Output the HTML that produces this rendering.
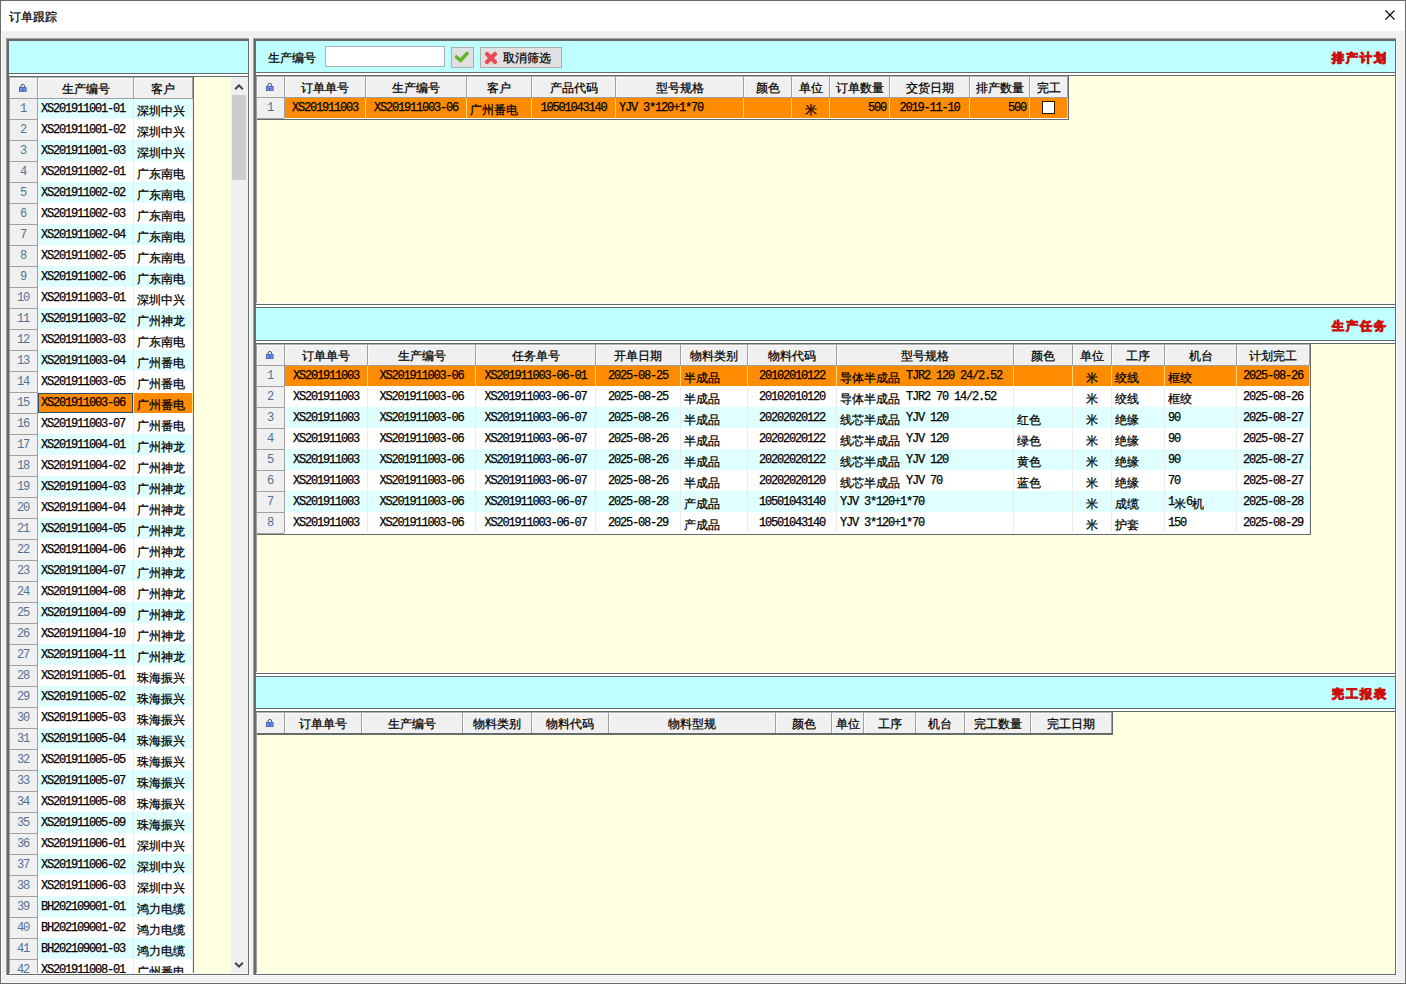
<!DOCTYPE html><html><head><meta charset="utf-8"><style>
@font-face{font-family:"Liberation Sans Box";src:local("Liberation Sans");size-adjust:150%;font-display:swap}
*{margin:0;padding:0}
html,body{width:1406px;height:984px;overflow:hidden;background:#f0f0f0}
body{position:relative;font-family:"Liberation Sans",sans-serif;}
div{position:absolute}
.tx{white-space:nowrap;overflow:hidden;color:#000;font-size:12px}
i{display:inline-block;width:12px;height:inherit;line-height:inherit;text-align:center;font-style:normal;font-family:"Liberation Sans Box","Liberation Sans",sans-serif;font-size:12px;vertical-align:top;overflow:visible;-webkit-text-stroke-width:0.25px}
.red{color:#cc1010;font-weight:bold}
.red i{width:14px;-webkit-text-stroke-width:1px}
.num{color:#4f7396}
.num b{-webkit-text-stroke-width:0}
b{display:inline-block;width:6px;height:inherit;line-height:inherit;vertical-align:top;text-align:center;font-family:"Liberation Mono",monospace;font-size:12px;font-weight:normal;-webkit-text-stroke-width:0.25px}
</style></head><body><div style="left:0px;top:0px;width:1406px;height:984px;background:#f0f0f0;"></div><div style="left:0px;top:0px;width:1406px;height:1px;background:#6b6b6b;"></div><div style="left:0px;top:983px;width:1406px;height:1px;background:#6b6b6b;"></div><div style="left:0px;top:0px;width:1px;height:984px;background:#6b6b6b;"></div><div style="left:1405px;top:0px;width:1px;height:984px;background:#6b6b6b;"></div><div style="left:1px;top:1px;width:1404px;height:30px;background:#ffffff;"></div><div style="left:1px;top:31px;width:1px;height:952px;background:#ffffff;"></div><div style="left:1404px;top:31px;width:1px;height:952px;background:#fafafa;"></div><div style="left:1px;top:982px;width:1404px;height:1px;background:#fafafa;"></div><div class="tx ttl" style="left:9px;top:5px;width:80px;height:20px;line-height:20px;text-align:left;"><i>订</i><i>单</i><i>跟</i><i>踪</i></div><svg style="position:absolute;left:1384px;top:9px" width="12" height="12"><path d="M1.5 1.5 L10.5 10.5 M10.5 1.5 L1.5 10.5" stroke="#000" stroke-width="1.1"/></svg><div style="left:6px;top:38px;width:244px;height:1px;background:#a0a0a0;"></div><div style="left:6px;top:38px;width:1px;height:938px;background:#a0a0a0;"></div><div style="left:7px;top:39px;width:242px;height:2px;background:#646b6b;"></div><div style="left:7px;top:39px;width:2px;height:936px;background:#646b6b;"></div><div style="left:248px;top:39px;width:1px;height:936px;background:#646b6b;"></div><div style="left:249px;top:38px;width:1px;height:938px;background:#ffffff;"></div><div style="left:7px;top:974px;width:242px;height:1px;background:#646b6b;"></div><div style="left:6px;top:975px;width:244px;height:1px;background:#ffffff;"></div><div style="left:9px;top:41px;width:239px;height:32px;background:#c0ffff;"></div><div style="left:9px;top:73px;width:239px;height:1px;background:#646b6b;"></div><div style="left:9px;top:74px;width:239px;height:2px;background:#ffffff;"></div><div style="left:9px;top:76px;width:239px;height:1px;background:#646b6b;"></div><div style="left:9px;top:77px;width:239px;height:897px;background:#ffffe1;"></div><div style="left:38px;top:99px;width:155px;height:20px;background:#e0ffff;"></div><div style="left:133px;top:99px;width:1px;height:20px;background:#ebebeb;"></div><div style="left:192px;top:99px;width:1px;height:20px;background:#ebebeb;"></div><div style="left:38px;top:119px;width:155px;height:21px;background:#ffffff;"></div><div style="left:133px;top:119px;width:1px;height:21px;background:#ebebeb;"></div><div style="left:192px;top:119px;width:1px;height:21px;background:#ebebeb;"></div><div style="left:38px;top:140px;width:155px;height:21px;background:#e0ffff;"></div><div style="left:133px;top:140px;width:1px;height:21px;background:#ebebeb;"></div><div style="left:192px;top:140px;width:1px;height:21px;background:#ebebeb;"></div><div style="left:38px;top:161px;width:155px;height:21px;background:#ffffff;"></div><div style="left:133px;top:161px;width:1px;height:21px;background:#ebebeb;"></div><div style="left:192px;top:161px;width:1px;height:21px;background:#ebebeb;"></div><div style="left:38px;top:182px;width:155px;height:21px;background:#e0ffff;"></div><div style="left:133px;top:182px;width:1px;height:21px;background:#ebebeb;"></div><div style="left:192px;top:182px;width:1px;height:21px;background:#ebebeb;"></div><div style="left:38px;top:203px;width:155px;height:21px;background:#ffffff;"></div><div style="left:133px;top:203px;width:1px;height:21px;background:#ebebeb;"></div><div style="left:192px;top:203px;width:1px;height:21px;background:#ebebeb;"></div><div style="left:38px;top:224px;width:155px;height:21px;background:#e0ffff;"></div><div style="left:133px;top:224px;width:1px;height:21px;background:#ebebeb;"></div><div style="left:192px;top:224px;width:1px;height:21px;background:#ebebeb;"></div><div style="left:38px;top:245px;width:155px;height:21px;background:#ffffff;"></div><div style="left:133px;top:245px;width:1px;height:21px;background:#ebebeb;"></div><div style="left:192px;top:245px;width:1px;height:21px;background:#ebebeb;"></div><div style="left:38px;top:266px;width:155px;height:21px;background:#e0ffff;"></div><div style="left:133px;top:266px;width:1px;height:21px;background:#ebebeb;"></div><div style="left:192px;top:266px;width:1px;height:21px;background:#ebebeb;"></div><div style="left:38px;top:287px;width:155px;height:21px;background:#ffffff;"></div><div style="left:133px;top:287px;width:1px;height:21px;background:#ebebeb;"></div><div style="left:192px;top:287px;width:1px;height:21px;background:#ebebeb;"></div><div style="left:38px;top:308px;width:155px;height:21px;background:#e0ffff;"></div><div style="left:133px;top:308px;width:1px;height:21px;background:#ebebeb;"></div><div style="left:192px;top:308px;width:1px;height:21px;background:#ebebeb;"></div><div style="left:38px;top:329px;width:155px;height:21px;background:#ffffff;"></div><div style="left:133px;top:329px;width:1px;height:21px;background:#ebebeb;"></div><div style="left:192px;top:329px;width:1px;height:21px;background:#ebebeb;"></div><div style="left:38px;top:350px;width:155px;height:21px;background:#e0ffff;"></div><div style="left:133px;top:350px;width:1px;height:21px;background:#ebebeb;"></div><div style="left:192px;top:350px;width:1px;height:21px;background:#ebebeb;"></div><div style="left:38px;top:371px;width:155px;height:21px;background:#ffffff;"></div><div style="left:133px;top:371px;width:1px;height:21px;background:#ebebeb;"></div><div style="left:192px;top:371px;width:1px;height:21px;background:#ebebeb;"></div><div style="left:38px;top:392px;width:155px;height:1px;background:#ffffff;"></div><div style="left:38px;top:393px;width:155px;height:20px;background:#ff8c00;"></div><div style="left:133px;top:393px;width:1px;height:20px;background:#ffd878;"></div><div style="left:192px;top:393px;width:1px;height:20px;background:#ffd878;"></div><div style="left:38px;top:413px;width:155px;height:21px;background:#ffffff;"></div><div style="left:133px;top:413px;width:1px;height:21px;background:#ebebeb;"></div><div style="left:192px;top:413px;width:1px;height:21px;background:#ebebeb;"></div><div style="left:38px;top:434px;width:155px;height:21px;background:#e0ffff;"></div><div style="left:133px;top:434px;width:1px;height:21px;background:#ebebeb;"></div><div style="left:192px;top:434px;width:1px;height:21px;background:#ebebeb;"></div><div style="left:38px;top:455px;width:155px;height:21px;background:#ffffff;"></div><div style="left:133px;top:455px;width:1px;height:21px;background:#ebebeb;"></div><div style="left:192px;top:455px;width:1px;height:21px;background:#ebebeb;"></div><div style="left:38px;top:476px;width:155px;height:21px;background:#e0ffff;"></div><div style="left:133px;top:476px;width:1px;height:21px;background:#ebebeb;"></div><div style="left:192px;top:476px;width:1px;height:21px;background:#ebebeb;"></div><div style="left:38px;top:497px;width:155px;height:21px;background:#ffffff;"></div><div style="left:133px;top:497px;width:1px;height:21px;background:#ebebeb;"></div><div style="left:192px;top:497px;width:1px;height:21px;background:#ebebeb;"></div><div style="left:38px;top:518px;width:155px;height:21px;background:#e0ffff;"></div><div style="left:133px;top:518px;width:1px;height:21px;background:#ebebeb;"></div><div style="left:192px;top:518px;width:1px;height:21px;background:#ebebeb;"></div><div style="left:38px;top:539px;width:155px;height:21px;background:#ffffff;"></div><div style="left:133px;top:539px;width:1px;height:21px;background:#ebebeb;"></div><div style="left:192px;top:539px;width:1px;height:21px;background:#ebebeb;"></div><div style="left:38px;top:560px;width:155px;height:21px;background:#e0ffff;"></div><div style="left:133px;top:560px;width:1px;height:21px;background:#ebebeb;"></div><div style="left:192px;top:560px;width:1px;height:21px;background:#ebebeb;"></div><div style="left:38px;top:581px;width:155px;height:21px;background:#ffffff;"></div><div style="left:133px;top:581px;width:1px;height:21px;background:#ebebeb;"></div><div style="left:192px;top:581px;width:1px;height:21px;background:#ebebeb;"></div><div style="left:38px;top:602px;width:155px;height:21px;background:#e0ffff;"></div><div style="left:133px;top:602px;width:1px;height:21px;background:#ebebeb;"></div><div style="left:192px;top:602px;width:1px;height:21px;background:#ebebeb;"></div><div style="left:38px;top:623px;width:155px;height:21px;background:#ffffff;"></div><div style="left:133px;top:623px;width:1px;height:21px;background:#ebebeb;"></div><div style="left:192px;top:623px;width:1px;height:21px;background:#ebebeb;"></div><div style="left:38px;top:644px;width:155px;height:21px;background:#e0ffff;"></div><div style="left:133px;top:644px;width:1px;height:21px;background:#ebebeb;"></div><div style="left:192px;top:644px;width:1px;height:21px;background:#ebebeb;"></div><div style="left:38px;top:665px;width:155px;height:21px;background:#ffffff;"></div><div style="left:133px;top:665px;width:1px;height:21px;background:#ebebeb;"></div><div style="left:192px;top:665px;width:1px;height:21px;background:#ebebeb;"></div><div style="left:38px;top:686px;width:155px;height:21px;background:#e0ffff;"></div><div style="left:133px;top:686px;width:1px;height:21px;background:#ebebeb;"></div><div style="left:192px;top:686px;width:1px;height:21px;background:#ebebeb;"></div><div style="left:38px;top:707px;width:155px;height:21px;background:#ffffff;"></div><div style="left:133px;top:707px;width:1px;height:21px;background:#ebebeb;"></div><div style="left:192px;top:707px;width:1px;height:21px;background:#ebebeb;"></div><div style="left:38px;top:728px;width:155px;height:21px;background:#e0ffff;"></div><div style="left:133px;top:728px;width:1px;height:21px;background:#ebebeb;"></div><div style="left:192px;top:728px;width:1px;height:21px;background:#ebebeb;"></div><div style="left:38px;top:749px;width:155px;height:21px;background:#ffffff;"></div><div style="left:133px;top:749px;width:1px;height:21px;background:#ebebeb;"></div><div style="left:192px;top:749px;width:1px;height:21px;background:#ebebeb;"></div><div style="left:38px;top:770px;width:155px;height:21px;background:#e0ffff;"></div><div style="left:133px;top:770px;width:1px;height:21px;background:#ebebeb;"></div><div style="left:192px;top:770px;width:1px;height:21px;background:#ebebeb;"></div><div style="left:38px;top:791px;width:155px;height:21px;background:#ffffff;"></div><div style="left:133px;top:791px;width:1px;height:21px;background:#ebebeb;"></div><div style="left:192px;top:791px;width:1px;height:21px;background:#ebebeb;"></div><div style="left:38px;top:812px;width:155px;height:21px;background:#e0ffff;"></div><div style="left:133px;top:812px;width:1px;height:21px;background:#ebebeb;"></div><div style="left:192px;top:812px;width:1px;height:21px;background:#ebebeb;"></div><div style="left:38px;top:833px;width:155px;height:21px;background:#ffffff;"></div><div style="left:133px;top:833px;width:1px;height:21px;background:#ebebeb;"></div><div style="left:192px;top:833px;width:1px;height:21px;background:#ebebeb;"></div><div style="left:38px;top:854px;width:155px;height:21px;background:#e0ffff;"></div><div style="left:133px;top:854px;width:1px;height:21px;background:#ebebeb;"></div><div style="left:192px;top:854px;width:1px;height:21px;background:#ebebeb;"></div><div style="left:38px;top:875px;width:155px;height:21px;background:#ffffff;"></div><div style="left:133px;top:875px;width:1px;height:21px;background:#ebebeb;"></div><div style="left:192px;top:875px;width:1px;height:21px;background:#ebebeb;"></div><div style="left:38px;top:896px;width:155px;height:21px;background:#e0ffff;"></div><div style="left:133px;top:896px;width:1px;height:21px;background:#ebebeb;"></div><div style="left:192px;top:896px;width:1px;height:21px;background:#ebebeb;"></div><div style="left:38px;top:917px;width:155px;height:21px;background:#ffffff;"></div><div style="left:133px;top:917px;width:1px;height:21px;background:#ebebeb;"></div><div style="left:192px;top:917px;width:1px;height:21px;background:#ebebeb;"></div><div style="left:38px;top:938px;width:155px;height:21px;background:#e0ffff;"></div><div style="left:133px;top:938px;width:1px;height:21px;background:#ebebeb;"></div><div style="left:192px;top:938px;width:1px;height:21px;background:#ebebeb;"></div><div style="left:38px;top:959px;width:155px;height:15px;background:#ffffff;"></div><div style="left:133px;top:959px;width:1px;height:15px;background:#ebebeb;"></div><div style="left:192px;top:959px;width:1px;height:15px;background:#ebebeb;"></div><div style="left:9px;top:99px;width:28px;height:875px;background:#f0f0f0;"></div><div style="left:37px;top:99px;width:1px;height:875px;background:#a0a0a0;"></div><div style="left:9px;top:119px;width:28px;height:1px;background:#a0a0a0;"></div><div style="left:9px;top:140px;width:28px;height:1px;background:#a0a0a0;"></div><div style="left:9px;top:161px;width:28px;height:1px;background:#a0a0a0;"></div><div style="left:9px;top:182px;width:28px;height:1px;background:#a0a0a0;"></div><div style="left:9px;top:203px;width:28px;height:1px;background:#a0a0a0;"></div><div style="left:9px;top:224px;width:28px;height:1px;background:#a0a0a0;"></div><div style="left:9px;top:245px;width:28px;height:1px;background:#a0a0a0;"></div><div style="left:9px;top:266px;width:28px;height:1px;background:#a0a0a0;"></div><div style="left:9px;top:287px;width:28px;height:1px;background:#a0a0a0;"></div><div style="left:9px;top:308px;width:28px;height:1px;background:#a0a0a0;"></div><div style="left:9px;top:329px;width:28px;height:1px;background:#a0a0a0;"></div><div style="left:9px;top:350px;width:28px;height:1px;background:#a0a0a0;"></div><div style="left:9px;top:371px;width:28px;height:1px;background:#a0a0a0;"></div><div style="left:9px;top:392px;width:28px;height:1px;background:#a0a0a0;"></div><div style="left:9px;top:413px;width:28px;height:1px;background:#a0a0a0;"></div><div style="left:9px;top:434px;width:28px;height:1px;background:#a0a0a0;"></div><div style="left:9px;top:455px;width:28px;height:1px;background:#a0a0a0;"></div><div style="left:9px;top:476px;width:28px;height:1px;background:#a0a0a0;"></div><div style="left:9px;top:497px;width:28px;height:1px;background:#a0a0a0;"></div><div style="left:9px;top:518px;width:28px;height:1px;background:#a0a0a0;"></div><div style="left:9px;top:539px;width:28px;height:1px;background:#a0a0a0;"></div><div style="left:9px;top:560px;width:28px;height:1px;background:#a0a0a0;"></div><div style="left:9px;top:581px;width:28px;height:1px;background:#a0a0a0;"></div><div style="left:9px;top:602px;width:28px;height:1px;background:#a0a0a0;"></div><div style="left:9px;top:623px;width:28px;height:1px;background:#a0a0a0;"></div><div style="left:9px;top:644px;width:28px;height:1px;background:#a0a0a0;"></div><div style="left:9px;top:665px;width:28px;height:1px;background:#a0a0a0;"></div><div style="left:9px;top:686px;width:28px;height:1px;background:#a0a0a0;"></div><div style="left:9px;top:707px;width:28px;height:1px;background:#a0a0a0;"></div><div style="left:9px;top:728px;width:28px;height:1px;background:#a0a0a0;"></div><div style="left:9px;top:749px;width:28px;height:1px;background:#a0a0a0;"></div><div style="left:9px;top:770px;width:28px;height:1px;background:#a0a0a0;"></div><div style="left:9px;top:791px;width:28px;height:1px;background:#a0a0a0;"></div><div style="left:9px;top:812px;width:28px;height:1px;background:#a0a0a0;"></div><div style="left:9px;top:833px;width:28px;height:1px;background:#a0a0a0;"></div><div style="left:9px;top:854px;width:28px;height:1px;background:#a0a0a0;"></div><div style="left:9px;top:875px;width:28px;height:1px;background:#a0a0a0;"></div><div style="left:9px;top:896px;width:28px;height:1px;background:#a0a0a0;"></div><div style="left:9px;top:917px;width:28px;height:1px;background:#a0a0a0;"></div><div style="left:9px;top:938px;width:28px;height:1px;background:#a0a0a0;"></div><div style="left:9px;top:959px;width:28px;height:1px;background:#a0a0a0;"></div><div class="tx num" style="left:9px;top:99px;width:28px;height:20px;line-height:20px;text-align:center;"><b>1</b></div><div class="tx num" style="left:9px;top:120px;width:28px;height:20px;line-height:20px;text-align:center;"><b>2</b></div><div class="tx num" style="left:9px;top:141px;width:28px;height:20px;line-height:20px;text-align:center;"><b>3</b></div><div class="tx num" style="left:9px;top:162px;width:28px;height:20px;line-height:20px;text-align:center;"><b>4</b></div><div class="tx num" style="left:9px;top:183px;width:28px;height:20px;line-height:20px;text-align:center;"><b>5</b></div><div class="tx num" style="left:9px;top:204px;width:28px;height:20px;line-height:20px;text-align:center;"><b>6</b></div><div class="tx num" style="left:9px;top:225px;width:28px;height:20px;line-height:20px;text-align:center;"><b>7</b></div><div class="tx num" style="left:9px;top:246px;width:28px;height:20px;line-height:20px;text-align:center;"><b>8</b></div><div class="tx num" style="left:9px;top:267px;width:28px;height:20px;line-height:20px;text-align:center;"><b>9</b></div><div class="tx num" style="left:9px;top:288px;width:28px;height:20px;line-height:20px;text-align:center;"><b>1</b><b>0</b></div><div class="tx num" style="left:9px;top:309px;width:28px;height:20px;line-height:20px;text-align:center;"><b>1</b><b>1</b></div><div class="tx num" style="left:9px;top:330px;width:28px;height:20px;line-height:20px;text-align:center;"><b>1</b><b>2</b></div><div class="tx num" style="left:9px;top:351px;width:28px;height:20px;line-height:20px;text-align:center;"><b>1</b><b>3</b></div><div class="tx num" style="left:9px;top:372px;width:28px;height:20px;line-height:20px;text-align:center;"><b>1</b><b>4</b></div><div class="tx num" style="left:9px;top:393px;width:28px;height:20px;line-height:20px;text-align:center;"><b>1</b><b>5</b></div><div class="tx num" style="left:9px;top:414px;width:28px;height:20px;line-height:20px;text-align:center;"><b>1</b><b>6</b></div><div class="tx num" style="left:9px;top:435px;width:28px;height:20px;line-height:20px;text-align:center;"><b>1</b><b>7</b></div><div class="tx num" style="left:9px;top:456px;width:28px;height:20px;line-height:20px;text-align:center;"><b>1</b><b>8</b></div><div class="tx num" style="left:9px;top:477px;width:28px;height:20px;line-height:20px;text-align:center;"><b>1</b><b>9</b></div><div class="tx num" style="left:9px;top:498px;width:28px;height:20px;line-height:20px;text-align:center;"><b>2</b><b>0</b></div><div class="tx num" style="left:9px;top:519px;width:28px;height:20px;line-height:20px;text-align:center;"><b>2</b><b>1</b></div><div class="tx num" style="left:9px;top:540px;width:28px;height:20px;line-height:20px;text-align:center;"><b>2</b><b>2</b></div><div class="tx num" style="left:9px;top:561px;width:28px;height:20px;line-height:20px;text-align:center;"><b>2</b><b>3</b></div><div class="tx num" style="left:9px;top:582px;width:28px;height:20px;line-height:20px;text-align:center;"><b>2</b><b>4</b></div><div class="tx num" style="left:9px;top:603px;width:28px;height:20px;line-height:20px;text-align:center;"><b>2</b><b>5</b></div><div class="tx num" style="left:9px;top:624px;width:28px;height:20px;line-height:20px;text-align:center;"><b>2</b><b>6</b></div><div class="tx num" style="left:9px;top:645px;width:28px;height:20px;line-height:20px;text-align:center;"><b>2</b><b>7</b></div><div class="tx num" style="left:9px;top:666px;width:28px;height:20px;line-height:20px;text-align:center;"><b>2</b><b>8</b></div><div class="tx num" style="left:9px;top:687px;width:28px;height:20px;line-height:20px;text-align:center;"><b>2</b><b>9</b></div><div class="tx num" style="left:9px;top:708px;width:28px;height:20px;line-height:20px;text-align:center;"><b>3</b><b>0</b></div><div class="tx num" style="left:9px;top:729px;width:28px;height:20px;line-height:20px;text-align:center;"><b>3</b><b>1</b></div><div class="tx num" style="left:9px;top:750px;width:28px;height:20px;line-height:20px;text-align:center;"><b>3</b><b>2</b></div><div class="tx num" style="left:9px;top:771px;width:28px;height:20px;line-height:20px;text-align:center;"><b>3</b><b>3</b></div><div class="tx num" style="left:9px;top:792px;width:28px;height:20px;line-height:20px;text-align:center;"><b>3</b><b>4</b></div><div class="tx num" style="left:9px;top:813px;width:28px;height:20px;line-height:20px;text-align:center;"><b>3</b><b>5</b></div><div class="tx num" style="left:9px;top:834px;width:28px;height:20px;line-height:20px;text-align:center;"><b>3</b><b>6</b></div><div class="tx num" style="left:9px;top:855px;width:28px;height:20px;line-height:20px;text-align:center;"><b>3</b><b>7</b></div><div class="tx num" style="left:9px;top:876px;width:28px;height:20px;line-height:20px;text-align:center;"><b>3</b><b>8</b></div><div class="tx num" style="left:9px;top:897px;width:28px;height:20px;line-height:20px;text-align:center;"><b>3</b><b>9</b></div><div class="tx num" style="left:9px;top:918px;width:28px;height:20px;line-height:20px;text-align:center;"><b>4</b><b>0</b></div><div class="tx num" style="left:9px;top:939px;width:28px;height:20px;line-height:20px;text-align:center;"><b>4</b><b>1</b></div><div class="tx num" style="left:9px;top:960px;width:28px;height:20px;line-height:20px;text-align:center;"><b>4</b><b>2</b></div><div style="left:9px;top:77px;width:183px;height:21px;background:#f0f0f0;"></div><div style="left:9px;top:98px;width:184px;height:1px;background:#a0a0a0;"></div><div style="left:9px;top:77px;width:184px;height:1px;background:#b0b0b0;"></div><div style="left:9px;top:78px;width:183px;height:1px;background:#fbfbfb;"></div><div style="left:10px;top:78px;width:1px;height:20px;background:#fbfbfb;"></div><div style="left:37px;top:77px;width:1px;height:21px;background:#a0a0a0;"></div><div style="left:38px;top:78px;width:1px;height:20px;background:#fbfbfb;"></div><div style="left:133px;top:77px;width:1px;height:21px;background:#a0a0a0;"></div><div style="left:134px;top:78px;width:1px;height:20px;background:#fbfbfb;"></div><div style="left:192px;top:77px;width:1px;height:21px;background:#a0a0a0;"></div><div style="left:19px;top:84px;width:8px;height:8px"><svg style="display:block" width="8" height="8" viewBox="0 0 8 8"><path d="M2 3.5 V2.2 A1.8 1.8 0 0 1 5.6 2.2 V3.5" fill="none" stroke="#404a70" stroke-width="1"/><rect x="0.5" y="3.5" width="6.6" height="4.3" fill="#6f8ee8" stroke="#3f58b0" stroke-width="0.8"/><rect x="3.3" y="5" width="1.1" height="1.2" fill="#1a2a60"/></svg></div><div class="tx hd" style="left:38px;top:77px;width:95px;height:20px;line-height:20px;text-align:center;"><i>生</i><i>产</i><i>编</i><i>号</i></div><div class="tx hd" style="left:134px;top:77px;width:58px;height:20px;line-height:20px;text-align:center;"><i>客</i><i>户</i></div><div style="left:193px;top:77px;width:1px;height:897px;background:#646b6b;"></div><div class="tx cell" style="left:38px;top:99px;width:95px;height:20px;line-height:20px;text-align:left;padding:0 3px;box-sizing:border-box;"><b>X</b><b>S</b><b>2</b><b>0</b><b>1</b><b>9</b><b>1</b><b>1</b><b>0</b><b>0</b><b>1</b><b>-</b><b>0</b><b>1</b></div><div class="tx cell" style="left:134px;top:99px;width:58px;height:20px;line-height:20px;text-align:left;padding:0 3px;box-sizing:border-box;"><i>深</i><i>圳</i><i>中</i><i>兴</i></div><div class="tx cell" style="left:38px;top:120px;width:95px;height:20px;line-height:20px;text-align:left;padding:0 3px;box-sizing:border-box;"><b>X</b><b>S</b><b>2</b><b>0</b><b>1</b><b>9</b><b>1</b><b>1</b><b>0</b><b>0</b><b>1</b><b>-</b><b>0</b><b>2</b></div><div class="tx cell" style="left:134px;top:120px;width:58px;height:20px;line-height:20px;text-align:left;padding:0 3px;box-sizing:border-box;"><i>深</i><i>圳</i><i>中</i><i>兴</i></div><div class="tx cell" style="left:38px;top:141px;width:95px;height:20px;line-height:20px;text-align:left;padding:0 3px;box-sizing:border-box;"><b>X</b><b>S</b><b>2</b><b>0</b><b>1</b><b>9</b><b>1</b><b>1</b><b>0</b><b>0</b><b>1</b><b>-</b><b>0</b><b>3</b></div><div class="tx cell" style="left:134px;top:141px;width:58px;height:20px;line-height:20px;text-align:left;padding:0 3px;box-sizing:border-box;"><i>深</i><i>圳</i><i>中</i><i>兴</i></div><div class="tx cell" style="left:38px;top:162px;width:95px;height:20px;line-height:20px;text-align:left;padding:0 3px;box-sizing:border-box;"><b>X</b><b>S</b><b>2</b><b>0</b><b>1</b><b>9</b><b>1</b><b>1</b><b>0</b><b>0</b><b>2</b><b>-</b><b>0</b><b>1</b></div><div class="tx cell" style="left:134px;top:162px;width:58px;height:20px;line-height:20px;text-align:left;padding:0 3px;box-sizing:border-box;"><i>广</i><i>东</i><i>南</i><i>电</i></div><div class="tx cell" style="left:38px;top:183px;width:95px;height:20px;line-height:20px;text-align:left;padding:0 3px;box-sizing:border-box;"><b>X</b><b>S</b><b>2</b><b>0</b><b>1</b><b>9</b><b>1</b><b>1</b><b>0</b><b>0</b><b>2</b><b>-</b><b>0</b><b>2</b></div><div class="tx cell" style="left:134px;top:183px;width:58px;height:20px;line-height:20px;text-align:left;padding:0 3px;box-sizing:border-box;"><i>广</i><i>东</i><i>南</i><i>电</i></div><div class="tx cell" style="left:38px;top:204px;width:95px;height:20px;line-height:20px;text-align:left;padding:0 3px;box-sizing:border-box;"><b>X</b><b>S</b><b>2</b><b>0</b><b>1</b><b>9</b><b>1</b><b>1</b><b>0</b><b>0</b><b>2</b><b>-</b><b>0</b><b>3</b></div><div class="tx cell" style="left:134px;top:204px;width:58px;height:20px;line-height:20px;text-align:left;padding:0 3px;box-sizing:border-box;"><i>广</i><i>东</i><i>南</i><i>电</i></div><div class="tx cell" style="left:38px;top:225px;width:95px;height:20px;line-height:20px;text-align:left;padding:0 3px;box-sizing:border-box;"><b>X</b><b>S</b><b>2</b><b>0</b><b>1</b><b>9</b><b>1</b><b>1</b><b>0</b><b>0</b><b>2</b><b>-</b><b>0</b><b>4</b></div><div class="tx cell" style="left:134px;top:225px;width:58px;height:20px;line-height:20px;text-align:left;padding:0 3px;box-sizing:border-box;"><i>广</i><i>东</i><i>南</i><i>电</i></div><div class="tx cell" style="left:38px;top:246px;width:95px;height:20px;line-height:20px;text-align:left;padding:0 3px;box-sizing:border-box;"><b>X</b><b>S</b><b>2</b><b>0</b><b>1</b><b>9</b><b>1</b><b>1</b><b>0</b><b>0</b><b>2</b><b>-</b><b>0</b><b>5</b></div><div class="tx cell" style="left:134px;top:246px;width:58px;height:20px;line-height:20px;text-align:left;padding:0 3px;box-sizing:border-box;"><i>广</i><i>东</i><i>南</i><i>电</i></div><div class="tx cell" style="left:38px;top:267px;width:95px;height:20px;line-height:20px;text-align:left;padding:0 3px;box-sizing:border-box;"><b>X</b><b>S</b><b>2</b><b>0</b><b>1</b><b>9</b><b>1</b><b>1</b><b>0</b><b>0</b><b>2</b><b>-</b><b>0</b><b>6</b></div><div class="tx cell" style="left:134px;top:267px;width:58px;height:20px;line-height:20px;text-align:left;padding:0 3px;box-sizing:border-box;"><i>广</i><i>东</i><i>南</i><i>电</i></div><div class="tx cell" style="left:38px;top:288px;width:95px;height:20px;line-height:20px;text-align:left;padding:0 3px;box-sizing:border-box;"><b>X</b><b>S</b><b>2</b><b>0</b><b>1</b><b>9</b><b>1</b><b>1</b><b>0</b><b>0</b><b>3</b><b>-</b><b>0</b><b>1</b></div><div class="tx cell" style="left:134px;top:288px;width:58px;height:20px;line-height:20px;text-align:left;padding:0 3px;box-sizing:border-box;"><i>深</i><i>圳</i><i>中</i><i>兴</i></div><div class="tx cell" style="left:38px;top:309px;width:95px;height:20px;line-height:20px;text-align:left;padding:0 3px;box-sizing:border-box;"><b>X</b><b>S</b><b>2</b><b>0</b><b>1</b><b>9</b><b>1</b><b>1</b><b>0</b><b>0</b><b>3</b><b>-</b><b>0</b><b>2</b></div><div class="tx cell" style="left:134px;top:309px;width:58px;height:20px;line-height:20px;text-align:left;padding:0 3px;box-sizing:border-box;"><i>广</i><i>州</i><i>神</i><i>龙</i></div><div class="tx cell" style="left:38px;top:330px;width:95px;height:20px;line-height:20px;text-align:left;padding:0 3px;box-sizing:border-box;"><b>X</b><b>S</b><b>2</b><b>0</b><b>1</b><b>9</b><b>1</b><b>1</b><b>0</b><b>0</b><b>3</b><b>-</b><b>0</b><b>3</b></div><div class="tx cell" style="left:134px;top:330px;width:58px;height:20px;line-height:20px;text-align:left;padding:0 3px;box-sizing:border-box;"><i>广</i><i>东</i><i>南</i><i>电</i></div><div class="tx cell" style="left:38px;top:351px;width:95px;height:20px;line-height:20px;text-align:left;padding:0 3px;box-sizing:border-box;"><b>X</b><b>S</b><b>2</b><b>0</b><b>1</b><b>9</b><b>1</b><b>1</b><b>0</b><b>0</b><b>3</b><b>-</b><b>0</b><b>4</b></div><div class="tx cell" style="left:134px;top:351px;width:58px;height:20px;line-height:20px;text-align:left;padding:0 3px;box-sizing:border-box;"><i>广</i><i>州</i><i>番</i><i>电</i></div><div class="tx cell" style="left:38px;top:372px;width:95px;height:20px;line-height:20px;text-align:left;padding:0 3px;box-sizing:border-box;"><b>X</b><b>S</b><b>2</b><b>0</b><b>1</b><b>9</b><b>1</b><b>1</b><b>0</b><b>0</b><b>3</b><b>-</b><b>0</b><b>5</b></div><div class="tx cell" style="left:134px;top:372px;width:58px;height:20px;line-height:20px;text-align:left;padding:0 3px;box-sizing:border-box;"><i>广</i><i>州</i><i>番</i><i>电</i></div><div class="tx cell" style="left:38px;top:393px;width:95px;height:20px;line-height:20px;text-align:left;padding:0 3px;box-sizing:border-box;"><b>X</b><b>S</b><b>2</b><b>0</b><b>1</b><b>9</b><b>1</b><b>1</b><b>0</b><b>0</b><b>3</b><b>-</b><b>0</b><b>6</b></div><div class="tx cell" style="left:134px;top:393px;width:58px;height:20px;line-height:20px;text-align:left;padding:0 3px;box-sizing:border-box;"><i>广</i><i>州</i><i>番</i><i>电</i></div><div style="left:38px;top:393px;width:93px;height:18px;border:1px solid #2a4e72"></div><div class="tx cell" style="left:38px;top:414px;width:95px;height:20px;line-height:20px;text-align:left;padding:0 3px;box-sizing:border-box;"><b>X</b><b>S</b><b>2</b><b>0</b><b>1</b><b>9</b><b>1</b><b>1</b><b>0</b><b>0</b><b>3</b><b>-</b><b>0</b><b>7</b></div><div class="tx cell" style="left:134px;top:414px;width:58px;height:20px;line-height:20px;text-align:left;padding:0 3px;box-sizing:border-box;"><i>广</i><i>州</i><i>番</i><i>电</i></div><div class="tx cell" style="left:38px;top:435px;width:95px;height:20px;line-height:20px;text-align:left;padding:0 3px;box-sizing:border-box;"><b>X</b><b>S</b><b>2</b><b>0</b><b>1</b><b>9</b><b>1</b><b>1</b><b>0</b><b>0</b><b>4</b><b>-</b><b>0</b><b>1</b></div><div class="tx cell" style="left:134px;top:435px;width:58px;height:20px;line-height:20px;text-align:left;padding:0 3px;box-sizing:border-box;"><i>广</i><i>州</i><i>神</i><i>龙</i></div><div class="tx cell" style="left:38px;top:456px;width:95px;height:20px;line-height:20px;text-align:left;padding:0 3px;box-sizing:border-box;"><b>X</b><b>S</b><b>2</b><b>0</b><b>1</b><b>9</b><b>1</b><b>1</b><b>0</b><b>0</b><b>4</b><b>-</b><b>0</b><b>2</b></div><div class="tx cell" style="left:134px;top:456px;width:58px;height:20px;line-height:20px;text-align:left;padding:0 3px;box-sizing:border-box;"><i>广</i><i>州</i><i>神</i><i>龙</i></div><div class="tx cell" style="left:38px;top:477px;width:95px;height:20px;line-height:20px;text-align:left;padding:0 3px;box-sizing:border-box;"><b>X</b><b>S</b><b>2</b><b>0</b><b>1</b><b>9</b><b>1</b><b>1</b><b>0</b><b>0</b><b>4</b><b>-</b><b>0</b><b>3</b></div><div class="tx cell" style="left:134px;top:477px;width:58px;height:20px;line-height:20px;text-align:left;padding:0 3px;box-sizing:border-box;"><i>广</i><i>州</i><i>神</i><i>龙</i></div><div class="tx cell" style="left:38px;top:498px;width:95px;height:20px;line-height:20px;text-align:left;padding:0 3px;box-sizing:border-box;"><b>X</b><b>S</b><b>2</b><b>0</b><b>1</b><b>9</b><b>1</b><b>1</b><b>0</b><b>0</b><b>4</b><b>-</b><b>0</b><b>4</b></div><div class="tx cell" style="left:134px;top:498px;width:58px;height:20px;line-height:20px;text-align:left;padding:0 3px;box-sizing:border-box;"><i>广</i><i>州</i><i>神</i><i>龙</i></div><div class="tx cell" style="left:38px;top:519px;width:95px;height:20px;line-height:20px;text-align:left;padding:0 3px;box-sizing:border-box;"><b>X</b><b>S</b><b>2</b><b>0</b><b>1</b><b>9</b><b>1</b><b>1</b><b>0</b><b>0</b><b>4</b><b>-</b><b>0</b><b>5</b></div><div class="tx cell" style="left:134px;top:519px;width:58px;height:20px;line-height:20px;text-align:left;padding:0 3px;box-sizing:border-box;"><i>广</i><i>州</i><i>神</i><i>龙</i></div><div class="tx cell" style="left:38px;top:540px;width:95px;height:20px;line-height:20px;text-align:left;padding:0 3px;box-sizing:border-box;"><b>X</b><b>S</b><b>2</b><b>0</b><b>1</b><b>9</b><b>1</b><b>1</b><b>0</b><b>0</b><b>4</b><b>-</b><b>0</b><b>6</b></div><div class="tx cell" style="left:134px;top:540px;width:58px;height:20px;line-height:20px;text-align:left;padding:0 3px;box-sizing:border-box;"><i>广</i><i>州</i><i>神</i><i>龙</i></div><div class="tx cell" style="left:38px;top:561px;width:95px;height:20px;line-height:20px;text-align:left;padding:0 3px;box-sizing:border-box;"><b>X</b><b>S</b><b>2</b><b>0</b><b>1</b><b>9</b><b>1</b><b>1</b><b>0</b><b>0</b><b>4</b><b>-</b><b>0</b><b>7</b></div><div class="tx cell" style="left:134px;top:561px;width:58px;height:20px;line-height:20px;text-align:left;padding:0 3px;box-sizing:border-box;"><i>广</i><i>州</i><i>神</i><i>龙</i></div><div class="tx cell" style="left:38px;top:582px;width:95px;height:20px;line-height:20px;text-align:left;padding:0 3px;box-sizing:border-box;"><b>X</b><b>S</b><b>2</b><b>0</b><b>1</b><b>9</b><b>1</b><b>1</b><b>0</b><b>0</b><b>4</b><b>-</b><b>0</b><b>8</b></div><div class="tx cell" style="left:134px;top:582px;width:58px;height:20px;line-height:20px;text-align:left;padding:0 3px;box-sizing:border-box;"><i>广</i><i>州</i><i>神</i><i>龙</i></div><div class="tx cell" style="left:38px;top:603px;width:95px;height:20px;line-height:20px;text-align:left;padding:0 3px;box-sizing:border-box;"><b>X</b><b>S</b><b>2</b><b>0</b><b>1</b><b>9</b><b>1</b><b>1</b><b>0</b><b>0</b><b>4</b><b>-</b><b>0</b><b>9</b></div><div class="tx cell" style="left:134px;top:603px;width:58px;height:20px;line-height:20px;text-align:left;padding:0 3px;box-sizing:border-box;"><i>广</i><i>州</i><i>神</i><i>龙</i></div><div class="tx cell" style="left:38px;top:624px;width:95px;height:20px;line-height:20px;text-align:left;padding:0 3px;box-sizing:border-box;"><b>X</b><b>S</b><b>2</b><b>0</b><b>1</b><b>9</b><b>1</b><b>1</b><b>0</b><b>0</b><b>4</b><b>-</b><b>1</b><b>0</b></div><div class="tx cell" style="left:134px;top:624px;width:58px;height:20px;line-height:20px;text-align:left;padding:0 3px;box-sizing:border-box;"><i>广</i><i>州</i><i>神</i><i>龙</i></div><div class="tx cell" style="left:38px;top:645px;width:95px;height:20px;line-height:20px;text-align:left;padding:0 3px;box-sizing:border-box;"><b>X</b><b>S</b><b>2</b><b>0</b><b>1</b><b>9</b><b>1</b><b>1</b><b>0</b><b>0</b><b>4</b><b>-</b><b>1</b><b>1</b></div><div class="tx cell" style="left:134px;top:645px;width:58px;height:20px;line-height:20px;text-align:left;padding:0 3px;box-sizing:border-box;"><i>广</i><i>州</i><i>神</i><i>龙</i></div><div class="tx cell" style="left:38px;top:666px;width:95px;height:20px;line-height:20px;text-align:left;padding:0 3px;box-sizing:border-box;"><b>X</b><b>S</b><b>2</b><b>0</b><b>1</b><b>9</b><b>1</b><b>1</b><b>0</b><b>0</b><b>5</b><b>-</b><b>0</b><b>1</b></div><div class="tx cell" style="left:134px;top:666px;width:58px;height:20px;line-height:20px;text-align:left;padding:0 3px;box-sizing:border-box;"><i>珠</i><i>海</i><i>振</i><i>兴</i></div><div class="tx cell" style="left:38px;top:687px;width:95px;height:20px;line-height:20px;text-align:left;padding:0 3px;box-sizing:border-box;"><b>X</b><b>S</b><b>2</b><b>0</b><b>1</b><b>9</b><b>1</b><b>1</b><b>0</b><b>0</b><b>5</b><b>-</b><b>0</b><b>2</b></div><div class="tx cell" style="left:134px;top:687px;width:58px;height:20px;line-height:20px;text-align:left;padding:0 3px;box-sizing:border-box;"><i>珠</i><i>海</i><i>振</i><i>兴</i></div><div class="tx cell" style="left:38px;top:708px;width:95px;height:20px;line-height:20px;text-align:left;padding:0 3px;box-sizing:border-box;"><b>X</b><b>S</b><b>2</b><b>0</b><b>1</b><b>9</b><b>1</b><b>1</b><b>0</b><b>0</b><b>5</b><b>-</b><b>0</b><b>3</b></div><div class="tx cell" style="left:134px;top:708px;width:58px;height:20px;line-height:20px;text-align:left;padding:0 3px;box-sizing:border-box;"><i>珠</i><i>海</i><i>振</i><i>兴</i></div><div class="tx cell" style="left:38px;top:729px;width:95px;height:20px;line-height:20px;text-align:left;padding:0 3px;box-sizing:border-box;"><b>X</b><b>S</b><b>2</b><b>0</b><b>1</b><b>9</b><b>1</b><b>1</b><b>0</b><b>0</b><b>5</b><b>-</b><b>0</b><b>4</b></div><div class="tx cell" style="left:134px;top:729px;width:58px;height:20px;line-height:20px;text-align:left;padding:0 3px;box-sizing:border-box;"><i>珠</i><i>海</i><i>振</i><i>兴</i></div><div class="tx cell" style="left:38px;top:750px;width:95px;height:20px;line-height:20px;text-align:left;padding:0 3px;box-sizing:border-box;"><b>X</b><b>S</b><b>2</b><b>0</b><b>1</b><b>9</b><b>1</b><b>1</b><b>0</b><b>0</b><b>5</b><b>-</b><b>0</b><b>5</b></div><div class="tx cell" style="left:134px;top:750px;width:58px;height:20px;line-height:20px;text-align:left;padding:0 3px;box-sizing:border-box;"><i>珠</i><i>海</i><i>振</i><i>兴</i></div><div class="tx cell" style="left:38px;top:771px;width:95px;height:20px;line-height:20px;text-align:left;padding:0 3px;box-sizing:border-box;"><b>X</b><b>S</b><b>2</b><b>0</b><b>1</b><b>9</b><b>1</b><b>1</b><b>0</b><b>0</b><b>5</b><b>-</b><b>0</b><b>7</b></div><div class="tx cell" style="left:134px;top:771px;width:58px;height:20px;line-height:20px;text-align:left;padding:0 3px;box-sizing:border-box;"><i>珠</i><i>海</i><i>振</i><i>兴</i></div><div class="tx cell" style="left:38px;top:792px;width:95px;height:20px;line-height:20px;text-align:left;padding:0 3px;box-sizing:border-box;"><b>X</b><b>S</b><b>2</b><b>0</b><b>1</b><b>9</b><b>1</b><b>1</b><b>0</b><b>0</b><b>5</b><b>-</b><b>0</b><b>8</b></div><div class="tx cell" style="left:134px;top:792px;width:58px;height:20px;line-height:20px;text-align:left;padding:0 3px;box-sizing:border-box;"><i>珠</i><i>海</i><i>振</i><i>兴</i></div><div class="tx cell" style="left:38px;top:813px;width:95px;height:20px;line-height:20px;text-align:left;padding:0 3px;box-sizing:border-box;"><b>X</b><b>S</b><b>2</b><b>0</b><b>1</b><b>9</b><b>1</b><b>1</b><b>0</b><b>0</b><b>5</b><b>-</b><b>0</b><b>9</b></div><div class="tx cell" style="left:134px;top:813px;width:58px;height:20px;line-height:20px;text-align:left;padding:0 3px;box-sizing:border-box;"><i>珠</i><i>海</i><i>振</i><i>兴</i></div><div class="tx cell" style="left:38px;top:834px;width:95px;height:20px;line-height:20px;text-align:left;padding:0 3px;box-sizing:border-box;"><b>X</b><b>S</b><b>2</b><b>0</b><b>1</b><b>9</b><b>1</b><b>1</b><b>0</b><b>0</b><b>6</b><b>-</b><b>0</b><b>1</b></div><div class="tx cell" style="left:134px;top:834px;width:58px;height:20px;line-height:20px;text-align:left;padding:0 3px;box-sizing:border-box;"><i>深</i><i>圳</i><i>中</i><i>兴</i></div><div class="tx cell" style="left:38px;top:855px;width:95px;height:20px;line-height:20px;text-align:left;padding:0 3px;box-sizing:border-box;"><b>X</b><b>S</b><b>2</b><b>0</b><b>1</b><b>9</b><b>1</b><b>1</b><b>0</b><b>0</b><b>6</b><b>-</b><b>0</b><b>2</b></div><div class="tx cell" style="left:134px;top:855px;width:58px;height:20px;line-height:20px;text-align:left;padding:0 3px;box-sizing:border-box;"><i>深</i><i>圳</i><i>中</i><i>兴</i></div><div class="tx cell" style="left:38px;top:876px;width:95px;height:20px;line-height:20px;text-align:left;padding:0 3px;box-sizing:border-box;"><b>X</b><b>S</b><b>2</b><b>0</b><b>1</b><b>9</b><b>1</b><b>1</b><b>0</b><b>0</b><b>6</b><b>-</b><b>0</b><b>3</b></div><div class="tx cell" style="left:134px;top:876px;width:58px;height:20px;line-height:20px;text-align:left;padding:0 3px;box-sizing:border-box;"><i>深</i><i>圳</i><i>中</i><i>兴</i></div><div class="tx cell" style="left:38px;top:897px;width:95px;height:20px;line-height:20px;text-align:left;padding:0 3px;box-sizing:border-box;"><b>B</b><b>H</b><b>2</b><b>0</b><b>2</b><b>1</b><b>0</b><b>9</b><b>0</b><b>0</b><b>1</b><b>-</b><b>0</b><b>1</b></div><div class="tx cell" style="left:134px;top:897px;width:58px;height:20px;line-height:20px;text-align:left;padding:0 3px;box-sizing:border-box;"><i>鸿</i><i>力</i><i>电</i><i>缆</i></div><div class="tx cell" style="left:38px;top:918px;width:95px;height:20px;line-height:20px;text-align:left;padding:0 3px;box-sizing:border-box;"><b>B</b><b>H</b><b>2</b><b>0</b><b>2</b><b>1</b><b>0</b><b>9</b><b>0</b><b>0</b><b>1</b><b>-</b><b>0</b><b>2</b></div><div class="tx cell" style="left:134px;top:918px;width:58px;height:20px;line-height:20px;text-align:left;padding:0 3px;box-sizing:border-box;"><i>鸿</i><i>力</i><i>电</i><i>缆</i></div><div class="tx cell" style="left:38px;top:939px;width:95px;height:20px;line-height:20px;text-align:left;padding:0 3px;box-sizing:border-box;"><b>B</b><b>H</b><b>2</b><b>0</b><b>2</b><b>1</b><b>0</b><b>9</b><b>0</b><b>0</b><b>1</b><b>-</b><b>0</b><b>3</b></div><div class="tx cell" style="left:134px;top:939px;width:58px;height:20px;line-height:20px;text-align:left;padding:0 3px;box-sizing:border-box;"><i>鸿</i><i>力</i><i>电</i><i>缆</i></div><div class="tx cell" style="left:38px;top:960px;width:95px;height:20px;line-height:20px;text-align:left;padding:0 3px;box-sizing:border-box;height:14px;"><b>X</b><b>S</b><b>2</b><b>0</b><b>1</b><b>9</b><b>1</b><b>1</b><b>0</b><b>0</b><b>8</b><b>-</b><b>0</b><b>1</b></div><div class="tx cell" style="left:134px;top:960px;width:58px;height:20px;line-height:20px;text-align:left;padding:0 3px;box-sizing:border-box;height:14px;"><i>广</i><i>州</i><i>番</i><i>电</i></div><div style="left:231px;top:77px;width:17px;height:897px;background:#f0f0f0;"></div><div style="left:232px;top:95px;width:14px;height:85px;background:#cdcdcd;"></div><svg style="position:absolute;left:234px;top:83px" width="10" height="8"><path d="M1.2 6.2 L5 2.4 L8.8 6.2" fill="none" stroke="#404040" stroke-width="2"/></svg><svg style="position:absolute;left:234px;top:961px" width="10" height="8"><path d="M1.2 1.8 L5 5.6 L8.8 1.8" fill="none" stroke="#404040" stroke-width="2"/></svg><div style="left:253px;top:38px;width:1144px;height:1px;background:#a0a0a0;"></div><div style="left:253px;top:38px;width:1px;height:938px;background:#a0a0a0;"></div><div style="left:254px;top:39px;width:1142px;height:2px;background:#646b6b;"></div><div style="left:254px;top:39px;width:2px;height:936px;background:#646b6b;"></div><div style="left:1395px;top:39px;width:1px;height:936px;background:#646b6b;"></div><div style="left:1396px;top:38px;width:1px;height:938px;background:#ffffff;"></div><div style="left:254px;top:974px;width:1142px;height:1px;background:#646b6b;"></div><div style="left:253px;top:975px;width:1144px;height:1px;background:#ffffff;"></div><div style="left:256px;top:41px;width:1139px;height:31px;background:#c0ffff;"></div><div style="left:256px;top:72px;width:1139px;height:1px;background:#646b6b;"></div><div style="left:256px;top:73px;width:1139px;height:2px;background:#ffffff;"></div><div style="left:256px;top:75px;width:1139px;height:1px;background:#646b6b;"></div><div style="left:256px;top:76px;width:1139px;height:228px;background:#ffffe1;"></div><div style="left:256px;top:304px;width:1139px;height:1px;background:#646b6b;"></div><div style="left:256px;top:305px;width:1139px;height:2px;background:#ffffff;"></div><div style="left:256px;top:307px;width:1139px;height:1px;background:#646b6b;"></div><div style="left:256px;top:308px;width:1139px;height:32px;background:#c0ffff;"></div><div style="left:256px;top:340px;width:1139px;height:1px;background:#646b6b;"></div><div style="left:256px;top:341px;width:1139px;height:2px;background:#ffffff;"></div><div style="left:256px;top:343px;width:1139px;height:1px;background:#646b6b;"></div><div style="left:256px;top:344px;width:1139px;height:329px;background:#ffffe1;"></div><div style="left:256px;top:673px;width:1139px;height:1px;background:#646b6b;"></div><div style="left:256px;top:674px;width:1139px;height:2px;background:#ffffff;"></div><div style="left:256px;top:676px;width:1139px;height:1px;background:#646b6b;"></div><div style="left:256px;top:677px;width:1139px;height:31px;background:#c0ffff;"></div><div style="left:256px;top:708px;width:1139px;height:1px;background:#646b6b;"></div><div style="left:256px;top:709px;width:1139px;height:2px;background:#ffffff;"></div><div style="left:256px;top:711px;width:1139px;height:1px;background:#646b6b;"></div><div style="left:256px;top:712px;width:1139px;height:262px;background:#ffffe1;"></div><div class="tx lbl" style="left:268px;top:46px;width:60px;height:20px;line-height:20px;text-align:left;"><i>生</i><i>产</i><i>编</i><i>号</i></div><div style="left:325px;top:46px;width:118px;height:19px;background:#fff;border:1px solid #abadb3"></div><div style="left:451px;top:47px;width:21px;height:19px;background:#e1e1e1;border:1px solid #adadad"></div><svg style="position:absolute;left:454px;top:50px" width="16" height="14" viewBox="0 0 16 14"><path d="M2.5 7 L6.5 10.5 L13 3.5" fill="none" stroke="#62b828" stroke-width="3.6" stroke-linecap="round" stroke-linejoin="round"/></svg><div style="left:480px;top:47px;width:80px;height:19px;background:#e1e1e1;border:1px solid #adadad"></div><svg style="position:absolute;left:484px;top:51px" width="14" height="14" viewBox="0 0 14 14"><path d="M3 3 L11 11 M11 3 L3 11" fill="none" stroke="#ea4a55" stroke-width="4.2" stroke-linecap="round"/></svg><div class="tx lbl" style="left:503px;top:46px;width:56px;height:20px;line-height:20px;text-align:left;"><i>取</i><i>消</i><i>筛</i><i>选</i></div><div class="tx red" style="left:1200px;top:41px;width:187px;height:31px;line-height:31px;text-align:right;"><i>排</i><i>产</i><i>计</i><i>划</i></div><div class="tx red" style="left:1200px;top:308px;width:187px;height:32px;line-height:32px;text-align:right;"><i>生</i><i>产</i><i>任</i><i>务</i></div><div class="tx red" style="left:1200px;top:677px;width:187px;height:31px;line-height:31px;text-align:right;"><i>完</i><i>工</i><i>报</i><i>表</i></div><div style="left:285px;top:98px;width:783px;height:20px;background:#ff8c00;"></div><div style="left:365px;top:98px;width:1px;height:20px;background:#ffd878;"></div><div style="left:466px;top:98px;width:1px;height:20px;background:#ffd878;"></div><div style="left:531px;top:98px;width:1px;height:20px;background:#ffd878;"></div><div style="left:615px;top:98px;width:1px;height:20px;background:#ffd878;"></div><div style="left:743px;top:98px;width:1px;height:20px;background:#ffd878;"></div><div style="left:791px;top:98px;width:1px;height:20px;background:#ffd878;"></div><div style="left:829px;top:98px;width:1px;height:20px;background:#ffd878;"></div><div style="left:889px;top:98px;width:1px;height:20px;background:#ffd878;"></div><div style="left:969px;top:98px;width:1px;height:20px;background:#ffd878;"></div><div style="left:1029px;top:98px;width:1px;height:20px;background:#ffd878;"></div><div style="left:1067px;top:98px;width:1px;height:20px;background:#ffd878;"></div><div style="left:285px;top:118px;width:783px;height:1px;background:#ffffff;"></div><div style="left:256px;top:98px;width:28px;height:20px;background:#f0f0f0;"></div><div style="left:284px;top:98px;width:1px;height:20px;background:#a0a0a0;"></div><div style="left:256px;top:118px;width:28px;height:1px;background:#a0a0a0;"></div><div class="tx num" style="left:256px;top:98px;width:28px;height:20px;line-height:20px;text-align:center;"><b>1</b></div><div style="left:256px;top:76px;width:811px;height:21px;background:#f0f0f0;"></div><div style="left:256px;top:97px;width:812px;height:1px;background:#a0a0a0;"></div><div style="left:256px;top:76px;width:812px;height:1px;background:#b0b0b0;"></div><div style="left:256px;top:77px;width:811px;height:1px;background:#fbfbfb;"></div><div style="left:257px;top:77px;width:1px;height:20px;background:#fbfbfb;"></div><div style="left:284px;top:76px;width:1px;height:21px;background:#a0a0a0;"></div><div style="left:285px;top:77px;width:1px;height:20px;background:#fbfbfb;"></div><div style="left:365px;top:76px;width:1px;height:21px;background:#a0a0a0;"></div><div style="left:366px;top:77px;width:1px;height:20px;background:#fbfbfb;"></div><div style="left:466px;top:76px;width:1px;height:21px;background:#a0a0a0;"></div><div style="left:467px;top:77px;width:1px;height:20px;background:#fbfbfb;"></div><div style="left:531px;top:76px;width:1px;height:21px;background:#a0a0a0;"></div><div style="left:532px;top:77px;width:1px;height:20px;background:#fbfbfb;"></div><div style="left:615px;top:76px;width:1px;height:21px;background:#a0a0a0;"></div><div style="left:616px;top:77px;width:1px;height:20px;background:#fbfbfb;"></div><div style="left:743px;top:76px;width:1px;height:21px;background:#a0a0a0;"></div><div style="left:744px;top:77px;width:1px;height:20px;background:#fbfbfb;"></div><div style="left:791px;top:76px;width:1px;height:21px;background:#a0a0a0;"></div><div style="left:792px;top:77px;width:1px;height:20px;background:#fbfbfb;"></div><div style="left:829px;top:76px;width:1px;height:21px;background:#a0a0a0;"></div><div style="left:830px;top:77px;width:1px;height:20px;background:#fbfbfb;"></div><div style="left:889px;top:76px;width:1px;height:21px;background:#a0a0a0;"></div><div style="left:890px;top:77px;width:1px;height:20px;background:#fbfbfb;"></div><div style="left:969px;top:76px;width:1px;height:21px;background:#a0a0a0;"></div><div style="left:970px;top:77px;width:1px;height:20px;background:#fbfbfb;"></div><div style="left:1029px;top:76px;width:1px;height:21px;background:#a0a0a0;"></div><div style="left:1030px;top:77px;width:1px;height:20px;background:#fbfbfb;"></div><div style="left:1067px;top:76px;width:1px;height:21px;background:#a0a0a0;"></div><div style="left:266px;top:83px;width:8px;height:8px"><svg style="display:block" width="8" height="8" viewBox="0 0 8 8"><path d="M2 3.5 V2.2 A1.8 1.8 0 0 1 5.6 2.2 V3.5" fill="none" stroke="#404a70" stroke-width="1"/><rect x="0.5" y="3.5" width="6.6" height="4.3" fill="#6f8ee8" stroke="#3f58b0" stroke-width="0.8"/><rect x="3.3" y="5" width="1.1" height="1.2" fill="#1a2a60"/></svg></div><div class="tx hd" style="left:285px;top:76px;width:80px;height:20px;line-height:20px;text-align:center;"><i>订</i><i>单</i><i>单</i><i>号</i></div><div class="tx hd" style="left:366px;top:76px;width:100px;height:20px;line-height:20px;text-align:center;"><i>生</i><i>产</i><i>编</i><i>号</i></div><div class="tx hd" style="left:467px;top:76px;width:64px;height:20px;line-height:20px;text-align:center;"><i>客</i><i>户</i></div><div class="tx hd" style="left:532px;top:76px;width:83px;height:20px;line-height:20px;text-align:center;"><i>产</i><i>品</i><i>代</i><i>码</i></div><div class="tx hd" style="left:616px;top:76px;width:127px;height:20px;line-height:20px;text-align:center;"><i>型</i><i>号</i><i>规</i><i>格</i></div><div class="tx hd" style="left:744px;top:76px;width:47px;height:20px;line-height:20px;text-align:center;"><i>颜</i><i>色</i></div><div class="tx hd" style="left:792px;top:76px;width:37px;height:20px;line-height:20px;text-align:center;"><i>单</i><i>位</i></div><div class="tx hd" style="left:830px;top:76px;width:59px;height:20px;line-height:20px;text-align:center;"><i>订</i><i>单</i><i>数</i><i>量</i></div><div class="tx hd" style="left:890px;top:76px;width:79px;height:20px;line-height:20px;text-align:center;"><i>交</i><i>货</i><i>日</i><i>期</i></div><div class="tx hd" style="left:970px;top:76px;width:59px;height:20px;line-height:20px;text-align:center;"><i>排</i><i>产</i><i>数</i><i>量</i></div><div class="tx hd" style="left:1030px;top:76px;width:37px;height:20px;line-height:20px;text-align:center;"><i>完</i><i>工</i></div><div style="left:1068px;top:76px;width:1px;height:44px;background:#646b6b;"></div><div style="left:256px;top:119px;width:813px;height:1px;background:#646b6b;"></div><div class="tx cell" style="left:285px;top:98px;width:80px;height:20px;line-height:20px;text-align:center;padding:0 3px;box-sizing:border-box;"><b>X</b><b>S</b><b>2</b><b>0</b><b>1</b><b>9</b><b>1</b><b>1</b><b>0</b><b>0</b><b>3</b></div><div class="tx cell" style="left:366px;top:98px;width:100px;height:20px;line-height:20px;text-align:center;padding:0 3px;box-sizing:border-box;"><b>X</b><b>S</b><b>2</b><b>0</b><b>1</b><b>9</b><b>1</b><b>1</b><b>0</b><b>0</b><b>3</b><b>-</b><b>0</b><b>6</b></div><div class="tx cell" style="left:467px;top:98px;width:64px;height:20px;line-height:20px;text-align:left;padding:0 3px;box-sizing:border-box;"><i>广</i><i>州</i><i>番</i><i>电</i></div><div class="tx cell" style="left:532px;top:98px;width:83px;height:20px;line-height:20px;text-align:center;padding:0 3px;box-sizing:border-box;"><b>1</b><b>0</b><b>5</b><b>0</b><b>1</b><b>0</b><b>4</b><b>3</b><b>1</b><b>4</b><b>0</b></div><div class="tx cell" style="left:616px;top:98px;width:127px;height:20px;line-height:20px;text-align:left;padding:0 3px;box-sizing:border-box;"><b>Y</b><b>J</b><b>V</b><b>&nbsp;</b><b>3</b><b>*</b><b>1</b><b>2</b><b>0</b><b>+</b><b>1</b><b>*</b><b>7</b><b>0</b></div><div class="tx cell" style="left:744px;top:98px;width:47px;height:20px;line-height:20px;text-align:left;padding:0 3px;box-sizing:border-box;"></div><div class="tx cell" style="left:792px;top:98px;width:37px;height:20px;line-height:20px;text-align:center;padding:0 3px;box-sizing:border-box;"><i>米</i></div><div class="tx cell" style="left:830px;top:98px;width:59px;height:20px;line-height:20px;text-align:right;padding:0 3px;box-sizing:border-box;"><b>5</b><b>0</b><b>0</b></div><div class="tx cell" style="left:890px;top:98px;width:79px;height:20px;line-height:20px;text-align:center;padding:0 3px;box-sizing:border-box;"><b>2</b><b>0</b><b>1</b><b>9</b><b>-</b><b>1</b><b>1</b><b>-</b><b>1</b><b>0</b></div><div class="tx cell" style="left:970px;top:98px;width:59px;height:20px;line-height:20px;text-align:right;padding:0 3px;box-sizing:border-box;"><b>5</b><b>0</b><b>0</b></div><div style="left:1042px;top:101px;width:11px;height:11px;background:#fff;border:1px solid #301800"></div><div style="left:285px;top:366px;width:1025px;height:20px;background:#ff8c00;"></div><div style="left:367px;top:366px;width:1px;height:20px;background:#ffd878;"></div><div style="left:475px;top:366px;width:1px;height:20px;background:#ffd878;"></div><div style="left:595px;top:366px;width:1px;height:20px;background:#ffd878;"></div><div style="left:680px;top:366px;width:1px;height:20px;background:#ffd878;"></div><div style="left:747px;top:366px;width:1px;height:20px;background:#ffd878;"></div><div style="left:836px;top:366px;width:1px;height:20px;background:#ffd878;"></div><div style="left:1013px;top:366px;width:1px;height:20px;background:#ffd878;"></div><div style="left:1072px;top:366px;width:1px;height:20px;background:#ffd878;"></div><div style="left:1111px;top:366px;width:1px;height:20px;background:#ffd878;"></div><div style="left:1164px;top:366px;width:1px;height:20px;background:#ffd878;"></div><div style="left:1236px;top:366px;width:1px;height:20px;background:#ffd878;"></div><div style="left:1309px;top:366px;width:1px;height:20px;background:#ffd878;"></div><div style="left:285px;top:386px;width:1025px;height:21px;background:#ffffff;"></div><div style="left:367px;top:386px;width:1px;height:21px;background:#ebebeb;"></div><div style="left:475px;top:386px;width:1px;height:21px;background:#ebebeb;"></div><div style="left:595px;top:386px;width:1px;height:21px;background:#ebebeb;"></div><div style="left:680px;top:386px;width:1px;height:21px;background:#ebebeb;"></div><div style="left:747px;top:386px;width:1px;height:21px;background:#ebebeb;"></div><div style="left:836px;top:386px;width:1px;height:21px;background:#ebebeb;"></div><div style="left:1013px;top:386px;width:1px;height:21px;background:#ebebeb;"></div><div style="left:1072px;top:386px;width:1px;height:21px;background:#ebebeb;"></div><div style="left:1111px;top:386px;width:1px;height:21px;background:#ebebeb;"></div><div style="left:1164px;top:386px;width:1px;height:21px;background:#ebebeb;"></div><div style="left:1236px;top:386px;width:1px;height:21px;background:#ebebeb;"></div><div style="left:1309px;top:386px;width:1px;height:21px;background:#ebebeb;"></div><div style="left:285px;top:407px;width:1025px;height:21px;background:#e0ffff;"></div><div style="left:367px;top:407px;width:1px;height:21px;background:#ebebeb;"></div><div style="left:475px;top:407px;width:1px;height:21px;background:#ebebeb;"></div><div style="left:595px;top:407px;width:1px;height:21px;background:#ebebeb;"></div><div style="left:680px;top:407px;width:1px;height:21px;background:#ebebeb;"></div><div style="left:747px;top:407px;width:1px;height:21px;background:#ebebeb;"></div><div style="left:836px;top:407px;width:1px;height:21px;background:#ebebeb;"></div><div style="left:1013px;top:407px;width:1px;height:21px;background:#ebebeb;"></div><div style="left:1072px;top:407px;width:1px;height:21px;background:#ebebeb;"></div><div style="left:1111px;top:407px;width:1px;height:21px;background:#ebebeb;"></div><div style="left:1164px;top:407px;width:1px;height:21px;background:#ebebeb;"></div><div style="left:1236px;top:407px;width:1px;height:21px;background:#ebebeb;"></div><div style="left:1309px;top:407px;width:1px;height:21px;background:#ebebeb;"></div><div style="left:285px;top:428px;width:1025px;height:21px;background:#ffffff;"></div><div style="left:367px;top:428px;width:1px;height:21px;background:#ebebeb;"></div><div style="left:475px;top:428px;width:1px;height:21px;background:#ebebeb;"></div><div style="left:595px;top:428px;width:1px;height:21px;background:#ebebeb;"></div><div style="left:680px;top:428px;width:1px;height:21px;background:#ebebeb;"></div><div style="left:747px;top:428px;width:1px;height:21px;background:#ebebeb;"></div><div style="left:836px;top:428px;width:1px;height:21px;background:#ebebeb;"></div><div style="left:1013px;top:428px;width:1px;height:21px;background:#ebebeb;"></div><div style="left:1072px;top:428px;width:1px;height:21px;background:#ebebeb;"></div><div style="left:1111px;top:428px;width:1px;height:21px;background:#ebebeb;"></div><div style="left:1164px;top:428px;width:1px;height:21px;background:#ebebeb;"></div><div style="left:1236px;top:428px;width:1px;height:21px;background:#ebebeb;"></div><div style="left:1309px;top:428px;width:1px;height:21px;background:#ebebeb;"></div><div style="left:285px;top:449px;width:1025px;height:21px;background:#e0ffff;"></div><div style="left:367px;top:449px;width:1px;height:21px;background:#ebebeb;"></div><div style="left:475px;top:449px;width:1px;height:21px;background:#ebebeb;"></div><div style="left:595px;top:449px;width:1px;height:21px;background:#ebebeb;"></div><div style="left:680px;top:449px;width:1px;height:21px;background:#ebebeb;"></div><div style="left:747px;top:449px;width:1px;height:21px;background:#ebebeb;"></div><div style="left:836px;top:449px;width:1px;height:21px;background:#ebebeb;"></div><div style="left:1013px;top:449px;width:1px;height:21px;background:#ebebeb;"></div><div style="left:1072px;top:449px;width:1px;height:21px;background:#ebebeb;"></div><div style="left:1111px;top:449px;width:1px;height:21px;background:#ebebeb;"></div><div style="left:1164px;top:449px;width:1px;height:21px;background:#ebebeb;"></div><div style="left:1236px;top:449px;width:1px;height:21px;background:#ebebeb;"></div><div style="left:1309px;top:449px;width:1px;height:21px;background:#ebebeb;"></div><div style="left:285px;top:470px;width:1025px;height:21px;background:#ffffff;"></div><div style="left:367px;top:470px;width:1px;height:21px;background:#ebebeb;"></div><div style="left:475px;top:470px;width:1px;height:21px;background:#ebebeb;"></div><div style="left:595px;top:470px;width:1px;height:21px;background:#ebebeb;"></div><div style="left:680px;top:470px;width:1px;height:21px;background:#ebebeb;"></div><div style="left:747px;top:470px;width:1px;height:21px;background:#ebebeb;"></div><div style="left:836px;top:470px;width:1px;height:21px;background:#ebebeb;"></div><div style="left:1013px;top:470px;width:1px;height:21px;background:#ebebeb;"></div><div style="left:1072px;top:470px;width:1px;height:21px;background:#ebebeb;"></div><div style="left:1111px;top:470px;width:1px;height:21px;background:#ebebeb;"></div><div style="left:1164px;top:470px;width:1px;height:21px;background:#ebebeb;"></div><div style="left:1236px;top:470px;width:1px;height:21px;background:#ebebeb;"></div><div style="left:1309px;top:470px;width:1px;height:21px;background:#ebebeb;"></div><div style="left:285px;top:491px;width:1025px;height:21px;background:#e0ffff;"></div><div style="left:367px;top:491px;width:1px;height:21px;background:#ebebeb;"></div><div style="left:475px;top:491px;width:1px;height:21px;background:#ebebeb;"></div><div style="left:595px;top:491px;width:1px;height:21px;background:#ebebeb;"></div><div style="left:680px;top:491px;width:1px;height:21px;background:#ebebeb;"></div><div style="left:747px;top:491px;width:1px;height:21px;background:#ebebeb;"></div><div style="left:836px;top:491px;width:1px;height:21px;background:#ebebeb;"></div><div style="left:1013px;top:491px;width:1px;height:21px;background:#ebebeb;"></div><div style="left:1072px;top:491px;width:1px;height:21px;background:#ebebeb;"></div><div style="left:1111px;top:491px;width:1px;height:21px;background:#ebebeb;"></div><div style="left:1164px;top:491px;width:1px;height:21px;background:#ebebeb;"></div><div style="left:1236px;top:491px;width:1px;height:21px;background:#ebebeb;"></div><div style="left:1309px;top:491px;width:1px;height:21px;background:#ebebeb;"></div><div style="left:285px;top:512px;width:1025px;height:21px;background:#ffffff;"></div><div style="left:367px;top:512px;width:1px;height:21px;background:#ebebeb;"></div><div style="left:475px;top:512px;width:1px;height:21px;background:#ebebeb;"></div><div style="left:595px;top:512px;width:1px;height:21px;background:#ebebeb;"></div><div style="left:680px;top:512px;width:1px;height:21px;background:#ebebeb;"></div><div style="left:747px;top:512px;width:1px;height:21px;background:#ebebeb;"></div><div style="left:836px;top:512px;width:1px;height:21px;background:#ebebeb;"></div><div style="left:1013px;top:512px;width:1px;height:21px;background:#ebebeb;"></div><div style="left:1072px;top:512px;width:1px;height:21px;background:#ebebeb;"></div><div style="left:1111px;top:512px;width:1px;height:21px;background:#ebebeb;"></div><div style="left:1164px;top:512px;width:1px;height:21px;background:#ebebeb;"></div><div style="left:1236px;top:512px;width:1px;height:21px;background:#ebebeb;"></div><div style="left:1309px;top:512px;width:1px;height:21px;background:#ebebeb;"></div><div style="left:285px;top:533px;width:1025px;height:1px;background:#ffffff;"></div><div style="left:256px;top:366px;width:28px;height:167px;background:#f0f0f0;"></div><div style="left:284px;top:366px;width:1px;height:167px;background:#a0a0a0;"></div><div style="left:256px;top:386px;width:28px;height:1px;background:#a0a0a0;"></div><div style="left:256px;top:407px;width:28px;height:1px;background:#a0a0a0;"></div><div style="left:256px;top:428px;width:28px;height:1px;background:#a0a0a0;"></div><div style="left:256px;top:449px;width:28px;height:1px;background:#a0a0a0;"></div><div style="left:256px;top:470px;width:28px;height:1px;background:#a0a0a0;"></div><div style="left:256px;top:491px;width:28px;height:1px;background:#a0a0a0;"></div><div style="left:256px;top:512px;width:28px;height:1px;background:#a0a0a0;"></div><div style="left:256px;top:533px;width:28px;height:1px;background:#a0a0a0;"></div><div class="tx num" style="left:256px;top:366px;width:28px;height:20px;line-height:20px;text-align:center;"><b>1</b></div><div class="tx num" style="left:256px;top:387px;width:28px;height:20px;line-height:20px;text-align:center;"><b>2</b></div><div class="tx num" style="left:256px;top:408px;width:28px;height:20px;line-height:20px;text-align:center;"><b>3</b></div><div class="tx num" style="left:256px;top:429px;width:28px;height:20px;line-height:20px;text-align:center;"><b>4</b></div><div class="tx num" style="left:256px;top:450px;width:28px;height:20px;line-height:20px;text-align:center;"><b>5</b></div><div class="tx num" style="left:256px;top:471px;width:28px;height:20px;line-height:20px;text-align:center;"><b>6</b></div><div class="tx num" style="left:256px;top:492px;width:28px;height:20px;line-height:20px;text-align:center;"><b>7</b></div><div class="tx num" style="left:256px;top:513px;width:28px;height:20px;line-height:20px;text-align:center;"><b>8</b></div><div style="left:256px;top:344px;width:1053px;height:21px;background:#f0f0f0;"></div><div style="left:256px;top:365px;width:1054px;height:1px;background:#a0a0a0;"></div><div style="left:256px;top:344px;width:1054px;height:1px;background:#b0b0b0;"></div><div style="left:256px;top:345px;width:1053px;height:1px;background:#fbfbfb;"></div><div style="left:257px;top:345px;width:1px;height:20px;background:#fbfbfb;"></div><div style="left:284px;top:344px;width:1px;height:21px;background:#a0a0a0;"></div><div style="left:285px;top:345px;width:1px;height:20px;background:#fbfbfb;"></div><div style="left:367px;top:344px;width:1px;height:21px;background:#a0a0a0;"></div><div style="left:368px;top:345px;width:1px;height:20px;background:#fbfbfb;"></div><div style="left:475px;top:344px;width:1px;height:21px;background:#a0a0a0;"></div><div style="left:476px;top:345px;width:1px;height:20px;background:#fbfbfb;"></div><div style="left:595px;top:344px;width:1px;height:21px;background:#a0a0a0;"></div><div style="left:596px;top:345px;width:1px;height:20px;background:#fbfbfb;"></div><div style="left:680px;top:344px;width:1px;height:21px;background:#a0a0a0;"></div><div style="left:681px;top:345px;width:1px;height:20px;background:#fbfbfb;"></div><div style="left:747px;top:344px;width:1px;height:21px;background:#a0a0a0;"></div><div style="left:748px;top:345px;width:1px;height:20px;background:#fbfbfb;"></div><div style="left:836px;top:344px;width:1px;height:21px;background:#a0a0a0;"></div><div style="left:837px;top:345px;width:1px;height:20px;background:#fbfbfb;"></div><div style="left:1013px;top:344px;width:1px;height:21px;background:#a0a0a0;"></div><div style="left:1014px;top:345px;width:1px;height:20px;background:#fbfbfb;"></div><div style="left:1072px;top:344px;width:1px;height:21px;background:#a0a0a0;"></div><div style="left:1073px;top:345px;width:1px;height:20px;background:#fbfbfb;"></div><div style="left:1111px;top:344px;width:1px;height:21px;background:#a0a0a0;"></div><div style="left:1112px;top:345px;width:1px;height:20px;background:#fbfbfb;"></div><div style="left:1164px;top:344px;width:1px;height:21px;background:#a0a0a0;"></div><div style="left:1165px;top:345px;width:1px;height:20px;background:#fbfbfb;"></div><div style="left:1236px;top:344px;width:1px;height:21px;background:#a0a0a0;"></div><div style="left:1237px;top:345px;width:1px;height:20px;background:#fbfbfb;"></div><div style="left:1309px;top:344px;width:1px;height:21px;background:#a0a0a0;"></div><div style="left:266px;top:351px;width:8px;height:8px"><svg style="display:block" width="8" height="8" viewBox="0 0 8 8"><path d="M2 3.5 V2.2 A1.8 1.8 0 0 1 5.6 2.2 V3.5" fill="none" stroke="#404a70" stroke-width="1"/><rect x="0.5" y="3.5" width="6.6" height="4.3" fill="#6f8ee8" stroke="#3f58b0" stroke-width="0.8"/><rect x="3.3" y="5" width="1.1" height="1.2" fill="#1a2a60"/></svg></div><div class="tx hd" style="left:285px;top:344px;width:82px;height:20px;line-height:20px;text-align:center;"><i>订</i><i>单</i><i>单</i><i>号</i></div><div class="tx hd" style="left:368px;top:344px;width:107px;height:20px;line-height:20px;text-align:center;"><i>生</i><i>产</i><i>编</i><i>号</i></div><div class="tx hd" style="left:476px;top:344px;width:119px;height:20px;line-height:20px;text-align:center;"><i>任</i><i>务</i><i>单</i><i>号</i></div><div class="tx hd" style="left:596px;top:344px;width:84px;height:20px;line-height:20px;text-align:center;"><i>开</i><i>单</i><i>日</i><i>期</i></div><div class="tx hd" style="left:681px;top:344px;width:66px;height:20px;line-height:20px;text-align:center;"><i>物</i><i>料</i><i>类</i><i>别</i></div><div class="tx hd" style="left:748px;top:344px;width:88px;height:20px;line-height:20px;text-align:center;"><i>物</i><i>料</i><i>代</i><i>码</i></div><div class="tx hd" style="left:837px;top:344px;width:176px;height:20px;line-height:20px;text-align:center;"><i>型</i><i>号</i><i>规</i><i>格</i></div><div class="tx hd" style="left:1014px;top:344px;width:58px;height:20px;line-height:20px;text-align:center;"><i>颜</i><i>色</i></div><div class="tx hd" style="left:1073px;top:344px;width:38px;height:20px;line-height:20px;text-align:center;"><i>单</i><i>位</i></div><div class="tx hd" style="left:1112px;top:344px;width:52px;height:20px;line-height:20px;text-align:center;"><i>工</i><i>序</i></div><div class="tx hd" style="left:1165px;top:344px;width:71px;height:20px;line-height:20px;text-align:center;"><i>机</i><i>台</i></div><div class="tx hd" style="left:1237px;top:344px;width:72px;height:20px;line-height:20px;text-align:center;"><i>计</i><i>划</i><i>完</i><i>工</i></div><div style="left:1310px;top:344px;width:1px;height:191px;background:#646b6b;"></div><div style="left:256px;top:534px;width:1055px;height:1px;background:#646b6b;"></div><div class="tx cell" style="left:285px;top:366px;width:82px;height:20px;line-height:20px;text-align:center;padding:0 3px;box-sizing:border-box;"><b>X</b><b>S</b><b>2</b><b>0</b><b>1</b><b>9</b><b>1</b><b>1</b><b>0</b><b>0</b><b>3</b></div><div class="tx cell" style="left:368px;top:366px;width:107px;height:20px;line-height:20px;text-align:center;padding:0 3px;box-sizing:border-box;"><b>X</b><b>S</b><b>2</b><b>0</b><b>1</b><b>9</b><b>1</b><b>1</b><b>0</b><b>0</b><b>3</b><b>-</b><b>0</b><b>6</b></div><div class="tx cell" style="left:476px;top:366px;width:119px;height:20px;line-height:20px;text-align:center;padding:0 3px;box-sizing:border-box;"><b>X</b><b>S</b><b>2</b><b>0</b><b>1</b><b>9</b><b>1</b><b>1</b><b>0</b><b>0</b><b>3</b><b>-</b><b>0</b><b>6</b><b>-</b><b>0</b><b>1</b></div><div class="tx cell" style="left:596px;top:366px;width:84px;height:20px;line-height:20px;text-align:center;padding:0 3px;box-sizing:border-box;"><b>2</b><b>0</b><b>2</b><b>5</b><b>-</b><b>0</b><b>8</b><b>-</b><b>2</b><b>5</b></div><div class="tx cell" style="left:681px;top:366px;width:66px;height:20px;line-height:20px;text-align:left;padding:0 3px;box-sizing:border-box;"><i>半</i><i>成</i><i>品</i></div><div class="tx cell" style="left:748px;top:366px;width:88px;height:20px;line-height:20px;text-align:center;padding:0 3px;box-sizing:border-box;"><b>2</b><b>0</b><b>1</b><b>0</b><b>2</b><b>0</b><b>1</b><b>0</b><b>1</b><b>2</b><b>2</b></div><div class="tx cell" style="left:837px;top:366px;width:176px;height:20px;line-height:20px;text-align:left;padding:0 3px;box-sizing:border-box;"><i>导</i><i>体</i><i>半</i><i>成</i><i>品</i><b>&nbsp;</b><b>T</b><b>J</b><b>R</b><b>2</b><b>&nbsp;</b><b>1</b><b>2</b><b>0</b><b>&nbsp;</b><b>2</b><b>4</b><b>/</b><b>2</b><b>.</b><b>5</b><b>2</b></div><div class="tx cell" style="left:1014px;top:366px;width:58px;height:20px;line-height:20px;text-align:left;padding:0 3px;box-sizing:border-box;"></div><div class="tx cell" style="left:1073px;top:366px;width:38px;height:20px;line-height:20px;text-align:center;padding:0 3px;box-sizing:border-box;"><i>米</i></div><div class="tx cell" style="left:1112px;top:366px;width:52px;height:20px;line-height:20px;text-align:left;padding:0 3px;box-sizing:border-box;"><i>绞</i><i>线</i></div><div class="tx cell" style="left:1165px;top:366px;width:71px;height:20px;line-height:20px;text-align:left;padding:0 3px;box-sizing:border-box;"><i>框</i><i>绞</i></div><div class="tx cell" style="left:1237px;top:366px;width:72px;height:20px;line-height:20px;text-align:center;padding:0 3px;box-sizing:border-box;"><b>2</b><b>0</b><b>2</b><b>5</b><b>-</b><b>0</b><b>8</b><b>-</b><b>2</b><b>6</b></div><div class="tx cell" style="left:285px;top:387px;width:82px;height:20px;line-height:20px;text-align:center;padding:0 3px;box-sizing:border-box;"><b>X</b><b>S</b><b>2</b><b>0</b><b>1</b><b>9</b><b>1</b><b>1</b><b>0</b><b>0</b><b>3</b></div><div class="tx cell" style="left:368px;top:387px;width:107px;height:20px;line-height:20px;text-align:center;padding:0 3px;box-sizing:border-box;"><b>X</b><b>S</b><b>2</b><b>0</b><b>1</b><b>9</b><b>1</b><b>1</b><b>0</b><b>0</b><b>3</b><b>-</b><b>0</b><b>6</b></div><div class="tx cell" style="left:476px;top:387px;width:119px;height:20px;line-height:20px;text-align:center;padding:0 3px;box-sizing:border-box;"><b>X</b><b>S</b><b>2</b><b>0</b><b>1</b><b>9</b><b>1</b><b>1</b><b>0</b><b>0</b><b>3</b><b>-</b><b>0</b><b>6</b><b>-</b><b>0</b><b>7</b></div><div class="tx cell" style="left:596px;top:387px;width:84px;height:20px;line-height:20px;text-align:center;padding:0 3px;box-sizing:border-box;"><b>2</b><b>0</b><b>2</b><b>5</b><b>-</b><b>0</b><b>8</b><b>-</b><b>2</b><b>5</b></div><div class="tx cell" style="left:681px;top:387px;width:66px;height:20px;line-height:20px;text-align:left;padding:0 3px;box-sizing:border-box;"><i>半</i><i>成</i><i>品</i></div><div class="tx cell" style="left:748px;top:387px;width:88px;height:20px;line-height:20px;text-align:center;padding:0 3px;box-sizing:border-box;"><b>2</b><b>0</b><b>1</b><b>0</b><b>2</b><b>0</b><b>1</b><b>0</b><b>1</b><b>2</b><b>0</b></div><div class="tx cell" style="left:837px;top:387px;width:176px;height:20px;line-height:20px;text-align:left;padding:0 3px;box-sizing:border-box;"><i>导</i><i>体</i><i>半</i><i>成</i><i>品</i><b>&nbsp;</b><b>T</b><b>J</b><b>R</b><b>2</b><b>&nbsp;</b><b>7</b><b>0</b><b>&nbsp;</b><b>1</b><b>4</b><b>/</b><b>2</b><b>.</b><b>5</b><b>2</b></div><div class="tx cell" style="left:1014px;top:387px;width:58px;height:20px;line-height:20px;text-align:left;padding:0 3px;box-sizing:border-box;"></div><div class="tx cell" style="left:1073px;top:387px;width:38px;height:20px;line-height:20px;text-align:center;padding:0 3px;box-sizing:border-box;"><i>米</i></div><div class="tx cell" style="left:1112px;top:387px;width:52px;height:20px;line-height:20px;text-align:left;padding:0 3px;box-sizing:border-box;"><i>绞</i><i>线</i></div><div class="tx cell" style="left:1165px;top:387px;width:71px;height:20px;line-height:20px;text-align:left;padding:0 3px;box-sizing:border-box;"><i>框</i><i>绞</i></div><div class="tx cell" style="left:1237px;top:387px;width:72px;height:20px;line-height:20px;text-align:center;padding:0 3px;box-sizing:border-box;"><b>2</b><b>0</b><b>2</b><b>5</b><b>-</b><b>0</b><b>8</b><b>-</b><b>2</b><b>6</b></div><div class="tx cell" style="left:285px;top:408px;width:82px;height:20px;line-height:20px;text-align:center;padding:0 3px;box-sizing:border-box;"><b>X</b><b>S</b><b>2</b><b>0</b><b>1</b><b>9</b><b>1</b><b>1</b><b>0</b><b>0</b><b>3</b></div><div class="tx cell" style="left:368px;top:408px;width:107px;height:20px;line-height:20px;text-align:center;padding:0 3px;box-sizing:border-box;"><b>X</b><b>S</b><b>2</b><b>0</b><b>1</b><b>9</b><b>1</b><b>1</b><b>0</b><b>0</b><b>3</b><b>-</b><b>0</b><b>6</b></div><div class="tx cell" style="left:476px;top:408px;width:119px;height:20px;line-height:20px;text-align:center;padding:0 3px;box-sizing:border-box;"><b>X</b><b>S</b><b>2</b><b>0</b><b>1</b><b>9</b><b>1</b><b>1</b><b>0</b><b>0</b><b>3</b><b>-</b><b>0</b><b>6</b><b>-</b><b>0</b><b>7</b></div><div class="tx cell" style="left:596px;top:408px;width:84px;height:20px;line-height:20px;text-align:center;padding:0 3px;box-sizing:border-box;"><b>2</b><b>0</b><b>2</b><b>5</b><b>-</b><b>0</b><b>8</b><b>-</b><b>2</b><b>6</b></div><div class="tx cell" style="left:681px;top:408px;width:66px;height:20px;line-height:20px;text-align:left;padding:0 3px;box-sizing:border-box;"><i>半</i><i>成</i><i>品</i></div><div class="tx cell" style="left:748px;top:408px;width:88px;height:20px;line-height:20px;text-align:center;padding:0 3px;box-sizing:border-box;"><b>2</b><b>0</b><b>2</b><b>0</b><b>2</b><b>0</b><b>2</b><b>0</b><b>1</b><b>2</b><b>2</b></div><div class="tx cell" style="left:837px;top:408px;width:176px;height:20px;line-height:20px;text-align:left;padding:0 3px;box-sizing:border-box;"><i>线</i><i>芯</i><i>半</i><i>成</i><i>品</i><b>&nbsp;</b><b>Y</b><b>J</b><b>V</b><b>&nbsp;</b><b>1</b><b>2</b><b>0</b></div><div class="tx cell" style="left:1014px;top:408px;width:58px;height:20px;line-height:20px;text-align:left;padding:0 3px;box-sizing:border-box;"><i>红</i><i>色</i></div><div class="tx cell" style="left:1073px;top:408px;width:38px;height:20px;line-height:20px;text-align:center;padding:0 3px;box-sizing:border-box;"><i>米</i></div><div class="tx cell" style="left:1112px;top:408px;width:52px;height:20px;line-height:20px;text-align:left;padding:0 3px;box-sizing:border-box;"><i>绝</i><i>缘</i></div><div class="tx cell" style="left:1165px;top:408px;width:71px;height:20px;line-height:20px;text-align:left;padding:0 3px;box-sizing:border-box;"><b>9</b><b>0</b></div><div class="tx cell" style="left:1237px;top:408px;width:72px;height:20px;line-height:20px;text-align:center;padding:0 3px;box-sizing:border-box;"><b>2</b><b>0</b><b>2</b><b>5</b><b>-</b><b>0</b><b>8</b><b>-</b><b>2</b><b>7</b></div><div class="tx cell" style="left:285px;top:429px;width:82px;height:20px;line-height:20px;text-align:center;padding:0 3px;box-sizing:border-box;"><b>X</b><b>S</b><b>2</b><b>0</b><b>1</b><b>9</b><b>1</b><b>1</b><b>0</b><b>0</b><b>3</b></div><div class="tx cell" style="left:368px;top:429px;width:107px;height:20px;line-height:20px;text-align:center;padding:0 3px;box-sizing:border-box;"><b>X</b><b>S</b><b>2</b><b>0</b><b>1</b><b>9</b><b>1</b><b>1</b><b>0</b><b>0</b><b>3</b><b>-</b><b>0</b><b>6</b></div><div class="tx cell" style="left:476px;top:429px;width:119px;height:20px;line-height:20px;text-align:center;padding:0 3px;box-sizing:border-box;"><b>X</b><b>S</b><b>2</b><b>0</b><b>1</b><b>9</b><b>1</b><b>1</b><b>0</b><b>0</b><b>3</b><b>-</b><b>0</b><b>6</b><b>-</b><b>0</b><b>7</b></div><div class="tx cell" style="left:596px;top:429px;width:84px;height:20px;line-height:20px;text-align:center;padding:0 3px;box-sizing:border-box;"><b>2</b><b>0</b><b>2</b><b>5</b><b>-</b><b>0</b><b>8</b><b>-</b><b>2</b><b>6</b></div><div class="tx cell" style="left:681px;top:429px;width:66px;height:20px;line-height:20px;text-align:left;padding:0 3px;box-sizing:border-box;"><i>半</i><i>成</i><i>品</i></div><div class="tx cell" style="left:748px;top:429px;width:88px;height:20px;line-height:20px;text-align:center;padding:0 3px;box-sizing:border-box;"><b>2</b><b>0</b><b>2</b><b>0</b><b>2</b><b>0</b><b>2</b><b>0</b><b>1</b><b>2</b><b>2</b></div><div class="tx cell" style="left:837px;top:429px;width:176px;height:20px;line-height:20px;text-align:left;padding:0 3px;box-sizing:border-box;"><i>线</i><i>芯</i><i>半</i><i>成</i><i>品</i><b>&nbsp;</b><b>Y</b><b>J</b><b>V</b><b>&nbsp;</b><b>1</b><b>2</b><b>0</b></div><div class="tx cell" style="left:1014px;top:429px;width:58px;height:20px;line-height:20px;text-align:left;padding:0 3px;box-sizing:border-box;"><i>绿</i><i>色</i></div><div class="tx cell" style="left:1073px;top:429px;width:38px;height:20px;line-height:20px;text-align:center;padding:0 3px;box-sizing:border-box;"><i>米</i></div><div class="tx cell" style="left:1112px;top:429px;width:52px;height:20px;line-height:20px;text-align:left;padding:0 3px;box-sizing:border-box;"><i>绝</i><i>缘</i></div><div class="tx cell" style="left:1165px;top:429px;width:71px;height:20px;line-height:20px;text-align:left;padding:0 3px;box-sizing:border-box;"><b>9</b><b>0</b></div><div class="tx cell" style="left:1237px;top:429px;width:72px;height:20px;line-height:20px;text-align:center;padding:0 3px;box-sizing:border-box;"><b>2</b><b>0</b><b>2</b><b>5</b><b>-</b><b>0</b><b>8</b><b>-</b><b>2</b><b>7</b></div><div class="tx cell" style="left:285px;top:450px;width:82px;height:20px;line-height:20px;text-align:center;padding:0 3px;box-sizing:border-box;"><b>X</b><b>S</b><b>2</b><b>0</b><b>1</b><b>9</b><b>1</b><b>1</b><b>0</b><b>0</b><b>3</b></div><div class="tx cell" style="left:368px;top:450px;width:107px;height:20px;line-height:20px;text-align:center;padding:0 3px;box-sizing:border-box;"><b>X</b><b>S</b><b>2</b><b>0</b><b>1</b><b>9</b><b>1</b><b>1</b><b>0</b><b>0</b><b>3</b><b>-</b><b>0</b><b>6</b></div><div class="tx cell" style="left:476px;top:450px;width:119px;height:20px;line-height:20px;text-align:center;padding:0 3px;box-sizing:border-box;"><b>X</b><b>S</b><b>2</b><b>0</b><b>1</b><b>9</b><b>1</b><b>1</b><b>0</b><b>0</b><b>3</b><b>-</b><b>0</b><b>6</b><b>-</b><b>0</b><b>7</b></div><div class="tx cell" style="left:596px;top:450px;width:84px;height:20px;line-height:20px;text-align:center;padding:0 3px;box-sizing:border-box;"><b>2</b><b>0</b><b>2</b><b>5</b><b>-</b><b>0</b><b>8</b><b>-</b><b>2</b><b>6</b></div><div class="tx cell" style="left:681px;top:450px;width:66px;height:20px;line-height:20px;text-align:left;padding:0 3px;box-sizing:border-box;"><i>半</i><i>成</i><i>品</i></div><div class="tx cell" style="left:748px;top:450px;width:88px;height:20px;line-height:20px;text-align:center;padding:0 3px;box-sizing:border-box;"><b>2</b><b>0</b><b>2</b><b>0</b><b>2</b><b>0</b><b>2</b><b>0</b><b>1</b><b>2</b><b>2</b></div><div class="tx cell" style="left:837px;top:450px;width:176px;height:20px;line-height:20px;text-align:left;padding:0 3px;box-sizing:border-box;"><i>线</i><i>芯</i><i>半</i><i>成</i><i>品</i><b>&nbsp;</b><b>Y</b><b>J</b><b>V</b><b>&nbsp;</b><b>1</b><b>2</b><b>0</b></div><div class="tx cell" style="left:1014px;top:450px;width:58px;height:20px;line-height:20px;text-align:left;padding:0 3px;box-sizing:border-box;"><i>黄</i><i>色</i></div><div class="tx cell" style="left:1073px;top:450px;width:38px;height:20px;line-height:20px;text-align:center;padding:0 3px;box-sizing:border-box;"><i>米</i></div><div class="tx cell" style="left:1112px;top:450px;width:52px;height:20px;line-height:20px;text-align:left;padding:0 3px;box-sizing:border-box;"><i>绝</i><i>缘</i></div><div class="tx cell" style="left:1165px;top:450px;width:71px;height:20px;line-height:20px;text-align:left;padding:0 3px;box-sizing:border-box;"><b>9</b><b>0</b></div><div class="tx cell" style="left:1237px;top:450px;width:72px;height:20px;line-height:20px;text-align:center;padding:0 3px;box-sizing:border-box;"><b>2</b><b>0</b><b>2</b><b>5</b><b>-</b><b>0</b><b>8</b><b>-</b><b>2</b><b>7</b></div><div class="tx cell" style="left:285px;top:471px;width:82px;height:20px;line-height:20px;text-align:center;padding:0 3px;box-sizing:border-box;"><b>X</b><b>S</b><b>2</b><b>0</b><b>1</b><b>9</b><b>1</b><b>1</b><b>0</b><b>0</b><b>3</b></div><div class="tx cell" style="left:368px;top:471px;width:107px;height:20px;line-height:20px;text-align:center;padding:0 3px;box-sizing:border-box;"><b>X</b><b>S</b><b>2</b><b>0</b><b>1</b><b>9</b><b>1</b><b>1</b><b>0</b><b>0</b><b>3</b><b>-</b><b>0</b><b>6</b></div><div class="tx cell" style="left:476px;top:471px;width:119px;height:20px;line-height:20px;text-align:center;padding:0 3px;box-sizing:border-box;"><b>X</b><b>S</b><b>2</b><b>0</b><b>1</b><b>9</b><b>1</b><b>1</b><b>0</b><b>0</b><b>3</b><b>-</b><b>0</b><b>6</b><b>-</b><b>0</b><b>7</b></div><div class="tx cell" style="left:596px;top:471px;width:84px;height:20px;line-height:20px;text-align:center;padding:0 3px;box-sizing:border-box;"><b>2</b><b>0</b><b>2</b><b>5</b><b>-</b><b>0</b><b>8</b><b>-</b><b>2</b><b>6</b></div><div class="tx cell" style="left:681px;top:471px;width:66px;height:20px;line-height:20px;text-align:left;padding:0 3px;box-sizing:border-box;"><i>半</i><i>成</i><i>品</i></div><div class="tx cell" style="left:748px;top:471px;width:88px;height:20px;line-height:20px;text-align:center;padding:0 3px;box-sizing:border-box;"><b>2</b><b>0</b><b>2</b><b>0</b><b>2</b><b>0</b><b>2</b><b>0</b><b>1</b><b>2</b><b>0</b></div><div class="tx cell" style="left:837px;top:471px;width:176px;height:20px;line-height:20px;text-align:left;padding:0 3px;box-sizing:border-box;"><i>线</i><i>芯</i><i>半</i><i>成</i><i>品</i><b>&nbsp;</b><b>Y</b><b>J</b><b>V</b><b>&nbsp;</b><b>7</b><b>0</b></div><div class="tx cell" style="left:1014px;top:471px;width:58px;height:20px;line-height:20px;text-align:left;padding:0 3px;box-sizing:border-box;"><i>蓝</i><i>色</i></div><div class="tx cell" style="left:1073px;top:471px;width:38px;height:20px;line-height:20px;text-align:center;padding:0 3px;box-sizing:border-box;"><i>米</i></div><div class="tx cell" style="left:1112px;top:471px;width:52px;height:20px;line-height:20px;text-align:left;padding:0 3px;box-sizing:border-box;"><i>绝</i><i>缘</i></div><div class="tx cell" style="left:1165px;top:471px;width:71px;height:20px;line-height:20px;text-align:left;padding:0 3px;box-sizing:border-box;"><b>7</b><b>0</b></div><div class="tx cell" style="left:1237px;top:471px;width:72px;height:20px;line-height:20px;text-align:center;padding:0 3px;box-sizing:border-box;"><b>2</b><b>0</b><b>2</b><b>5</b><b>-</b><b>0</b><b>8</b><b>-</b><b>2</b><b>7</b></div><div class="tx cell" style="left:285px;top:492px;width:82px;height:20px;line-height:20px;text-align:center;padding:0 3px;box-sizing:border-box;"><b>X</b><b>S</b><b>2</b><b>0</b><b>1</b><b>9</b><b>1</b><b>1</b><b>0</b><b>0</b><b>3</b></div><div class="tx cell" style="left:368px;top:492px;width:107px;height:20px;line-height:20px;text-align:center;padding:0 3px;box-sizing:border-box;"><b>X</b><b>S</b><b>2</b><b>0</b><b>1</b><b>9</b><b>1</b><b>1</b><b>0</b><b>0</b><b>3</b><b>-</b><b>0</b><b>6</b></div><div class="tx cell" style="left:476px;top:492px;width:119px;height:20px;line-height:20px;text-align:center;padding:0 3px;box-sizing:border-box;"><b>X</b><b>S</b><b>2</b><b>0</b><b>1</b><b>9</b><b>1</b><b>1</b><b>0</b><b>0</b><b>3</b><b>-</b><b>0</b><b>6</b><b>-</b><b>0</b><b>7</b></div><div class="tx cell" style="left:596px;top:492px;width:84px;height:20px;line-height:20px;text-align:center;padding:0 3px;box-sizing:border-box;"><b>2</b><b>0</b><b>2</b><b>5</b><b>-</b><b>0</b><b>8</b><b>-</b><b>2</b><b>8</b></div><div class="tx cell" style="left:681px;top:492px;width:66px;height:20px;line-height:20px;text-align:left;padding:0 3px;box-sizing:border-box;"><i>产</i><i>成</i><i>品</i></div><div class="tx cell" style="left:748px;top:492px;width:88px;height:20px;line-height:20px;text-align:center;padding:0 3px;box-sizing:border-box;"><b>1</b><b>0</b><b>5</b><b>0</b><b>1</b><b>0</b><b>4</b><b>3</b><b>1</b><b>4</b><b>0</b></div><div class="tx cell" style="left:837px;top:492px;width:176px;height:20px;line-height:20px;text-align:left;padding:0 3px;box-sizing:border-box;"><b>Y</b><b>J</b><b>V</b><b>&nbsp;</b><b>3</b><b>*</b><b>1</b><b>2</b><b>0</b><b>+</b><b>1</b><b>*</b><b>7</b><b>0</b></div><div class="tx cell" style="left:1014px;top:492px;width:58px;height:20px;line-height:20px;text-align:left;padding:0 3px;box-sizing:border-box;"></div><div class="tx cell" style="left:1073px;top:492px;width:38px;height:20px;line-height:20px;text-align:center;padding:0 3px;box-sizing:border-box;"><i>米</i></div><div class="tx cell" style="left:1112px;top:492px;width:52px;height:20px;line-height:20px;text-align:left;padding:0 3px;box-sizing:border-box;"><i>成</i><i>缆</i></div><div class="tx cell" style="left:1165px;top:492px;width:71px;height:20px;line-height:20px;text-align:left;padding:0 3px;box-sizing:border-box;"><b>1</b><i>米</i><b>6</b><i>机</i></div><div class="tx cell" style="left:1237px;top:492px;width:72px;height:20px;line-height:20px;text-align:center;padding:0 3px;box-sizing:border-box;"><b>2</b><b>0</b><b>2</b><b>5</b><b>-</b><b>0</b><b>8</b><b>-</b><b>2</b><b>8</b></div><div class="tx cell" style="left:285px;top:513px;width:82px;height:20px;line-height:20px;text-align:center;padding:0 3px;box-sizing:border-box;"><b>X</b><b>S</b><b>2</b><b>0</b><b>1</b><b>9</b><b>1</b><b>1</b><b>0</b><b>0</b><b>3</b></div><div class="tx cell" style="left:368px;top:513px;width:107px;height:20px;line-height:20px;text-align:center;padding:0 3px;box-sizing:border-box;"><b>X</b><b>S</b><b>2</b><b>0</b><b>1</b><b>9</b><b>1</b><b>1</b><b>0</b><b>0</b><b>3</b><b>-</b><b>0</b><b>6</b></div><div class="tx cell" style="left:476px;top:513px;width:119px;height:20px;line-height:20px;text-align:center;padding:0 3px;box-sizing:border-box;"><b>X</b><b>S</b><b>2</b><b>0</b><b>1</b><b>9</b><b>1</b><b>1</b><b>0</b><b>0</b><b>3</b><b>-</b><b>0</b><b>6</b><b>-</b><b>0</b><b>7</b></div><div class="tx cell" style="left:596px;top:513px;width:84px;height:20px;line-height:20px;text-align:center;padding:0 3px;box-sizing:border-box;"><b>2</b><b>0</b><b>2</b><b>5</b><b>-</b><b>0</b><b>8</b><b>-</b><b>2</b><b>9</b></div><div class="tx cell" style="left:681px;top:513px;width:66px;height:20px;line-height:20px;text-align:left;padding:0 3px;box-sizing:border-box;"><i>产</i><i>成</i><i>品</i></div><div class="tx cell" style="left:748px;top:513px;width:88px;height:20px;line-height:20px;text-align:center;padding:0 3px;box-sizing:border-box;"><b>1</b><b>0</b><b>5</b><b>0</b><b>1</b><b>0</b><b>4</b><b>3</b><b>1</b><b>4</b><b>0</b></div><div class="tx cell" style="left:837px;top:513px;width:176px;height:20px;line-height:20px;text-align:left;padding:0 3px;box-sizing:border-box;"><b>Y</b><b>J</b><b>V</b><b>&nbsp;</b><b>3</b><b>*</b><b>1</b><b>2</b><b>0</b><b>+</b><b>1</b><b>*</b><b>7</b><b>0</b></div><div class="tx cell" style="left:1014px;top:513px;width:58px;height:20px;line-height:20px;text-align:left;padding:0 3px;box-sizing:border-box;"></div><div class="tx cell" style="left:1073px;top:513px;width:38px;height:20px;line-height:20px;text-align:center;padding:0 3px;box-sizing:border-box;"><i>米</i></div><div class="tx cell" style="left:1112px;top:513px;width:52px;height:20px;line-height:20px;text-align:left;padding:0 3px;box-sizing:border-box;"><i>护</i><i>套</i></div><div class="tx cell" style="left:1165px;top:513px;width:71px;height:20px;line-height:20px;text-align:left;padding:0 3px;box-sizing:border-box;"><b>1</b><b>5</b><b>0</b></div><div class="tx cell" style="left:1237px;top:513px;width:72px;height:20px;line-height:20px;text-align:center;padding:0 3px;box-sizing:border-box;"><b>2</b><b>0</b><b>2</b><b>5</b><b>-</b><b>0</b><b>8</b><b>-</b><b>2</b><b>9</b></div><div style="left:256px;top:712px;width:855px;height:21px;background:#f0f0f0;"></div><div style="left:256px;top:733px;width:856px;height:1px;background:#646b6b;"></div><div style="left:256px;top:712px;width:856px;height:1px;background:#b0b0b0;"></div><div style="left:256px;top:713px;width:855px;height:1px;background:#fbfbfb;"></div><div style="left:257px;top:713px;width:1px;height:20px;background:#fbfbfb;"></div><div style="left:284px;top:712px;width:1px;height:21px;background:#a0a0a0;"></div><div style="left:285px;top:713px;width:1px;height:20px;background:#fbfbfb;"></div><div style="left:361px;top:712px;width:1px;height:21px;background:#a0a0a0;"></div><div style="left:362px;top:713px;width:1px;height:20px;background:#fbfbfb;"></div><div style="left:462px;top:712px;width:1px;height:21px;background:#a0a0a0;"></div><div style="left:463px;top:713px;width:1px;height:20px;background:#fbfbfb;"></div><div style="left:531px;top:712px;width:1px;height:21px;background:#a0a0a0;"></div><div style="left:532px;top:713px;width:1px;height:20px;background:#fbfbfb;"></div><div style="left:608px;top:712px;width:1px;height:21px;background:#a0a0a0;"></div><div style="left:609px;top:713px;width:1px;height:20px;background:#fbfbfb;"></div><div style="left:775px;top:712px;width:1px;height:21px;background:#a0a0a0;"></div><div style="left:776px;top:713px;width:1px;height:20px;background:#fbfbfb;"></div><div style="left:831px;top:712px;width:1px;height:21px;background:#a0a0a0;"></div><div style="left:832px;top:713px;width:1px;height:20px;background:#fbfbfb;"></div><div style="left:863px;top:712px;width:1px;height:21px;background:#a0a0a0;"></div><div style="left:864px;top:713px;width:1px;height:20px;background:#fbfbfb;"></div><div style="left:915px;top:712px;width:1px;height:21px;background:#a0a0a0;"></div><div style="left:916px;top:713px;width:1px;height:20px;background:#fbfbfb;"></div><div style="left:964px;top:712px;width:1px;height:21px;background:#a0a0a0;"></div><div style="left:965px;top:713px;width:1px;height:20px;background:#fbfbfb;"></div><div style="left:1030px;top:712px;width:1px;height:21px;background:#a0a0a0;"></div><div style="left:1031px;top:713px;width:1px;height:20px;background:#fbfbfb;"></div><div style="left:1111px;top:712px;width:1px;height:21px;background:#a0a0a0;"></div><div style="left:266px;top:719px;width:8px;height:8px"><svg style="display:block" width="8" height="8" viewBox="0 0 8 8"><path d="M2 3.5 V2.2 A1.8 1.8 0 0 1 5.6 2.2 V3.5" fill="none" stroke="#404a70" stroke-width="1"/><rect x="0.5" y="3.5" width="6.6" height="4.3" fill="#6f8ee8" stroke="#3f58b0" stroke-width="0.8"/><rect x="3.3" y="5" width="1.1" height="1.2" fill="#1a2a60"/></svg></div><div class="tx hd" style="left:285px;top:712px;width:76px;height:20px;line-height:20px;text-align:center;"><i>订</i><i>单</i><i>单</i><i>号</i></div><div class="tx hd" style="left:362px;top:712px;width:100px;height:20px;line-height:20px;text-align:center;"><i>生</i><i>产</i><i>编</i><i>号</i></div><div class="tx hd" style="left:463px;top:712px;width:68px;height:20px;line-height:20px;text-align:center;"><i>物</i><i>料</i><i>类</i><i>别</i></div><div class="tx hd" style="left:532px;top:712px;width:76px;height:20px;line-height:20px;text-align:center;"><i>物</i><i>料</i><i>代</i><i>码</i></div><div class="tx hd" style="left:609px;top:712px;width:166px;height:20px;line-height:20px;text-align:center;"><i>物</i><i>料</i><i>型</i><i>规</i></div><div class="tx hd" style="left:776px;top:712px;width:55px;height:20px;line-height:20px;text-align:center;"><i>颜</i><i>色</i></div><div class="tx hd" style="left:832px;top:712px;width:31px;height:20px;line-height:20px;text-align:center;"><i>单</i><i>位</i></div><div class="tx hd" style="left:864px;top:712px;width:51px;height:20px;line-height:20px;text-align:center;"><i>工</i><i>序</i></div><div class="tx hd" style="left:916px;top:712px;width:48px;height:20px;line-height:20px;text-align:center;"><i>机</i><i>台</i></div><div class="tx hd" style="left:965px;top:712px;width:65px;height:20px;line-height:20px;text-align:center;"><i>完</i><i>工</i><i>数</i><i>量</i></div><div class="tx hd" style="left:1031px;top:712px;width:80px;height:20px;line-height:20px;text-align:center;"><i>完</i><i>工</i><i>日</i><i>期</i></div><div style="left:1112px;top:712px;width:1px;height:23px;background:#646b6b;"></div><div style="left:256px;top:734px;width:857px;height:1px;background:#646b6b;"></div><div style="left:256px;top:76px;width:1px;height:228px;background:#a0a0a0;"></div><div style="left:256px;top:303px;width:1139px;height:1px;background:#fbfbfb;"></div><div style="left:256px;top:344px;width:1px;height:329px;background:#a0a0a0;"></div><div style="left:256px;top:672px;width:1139px;height:1px;background:#fbfbfb;"></div><div style="left:256px;top:712px;width:1px;height:262px;background:#a0a0a0;"></div><div style="left:256px;top:973px;width:1139px;height:1px;background:#fbfbfb;"></div><div style="left:9px;top:77px;width:1px;height:897px;background:#a0a0a0;"></div><div style="left:9px;top:973px;width:239px;height:1px;background:#fbfbfb;"></div></body></html>
